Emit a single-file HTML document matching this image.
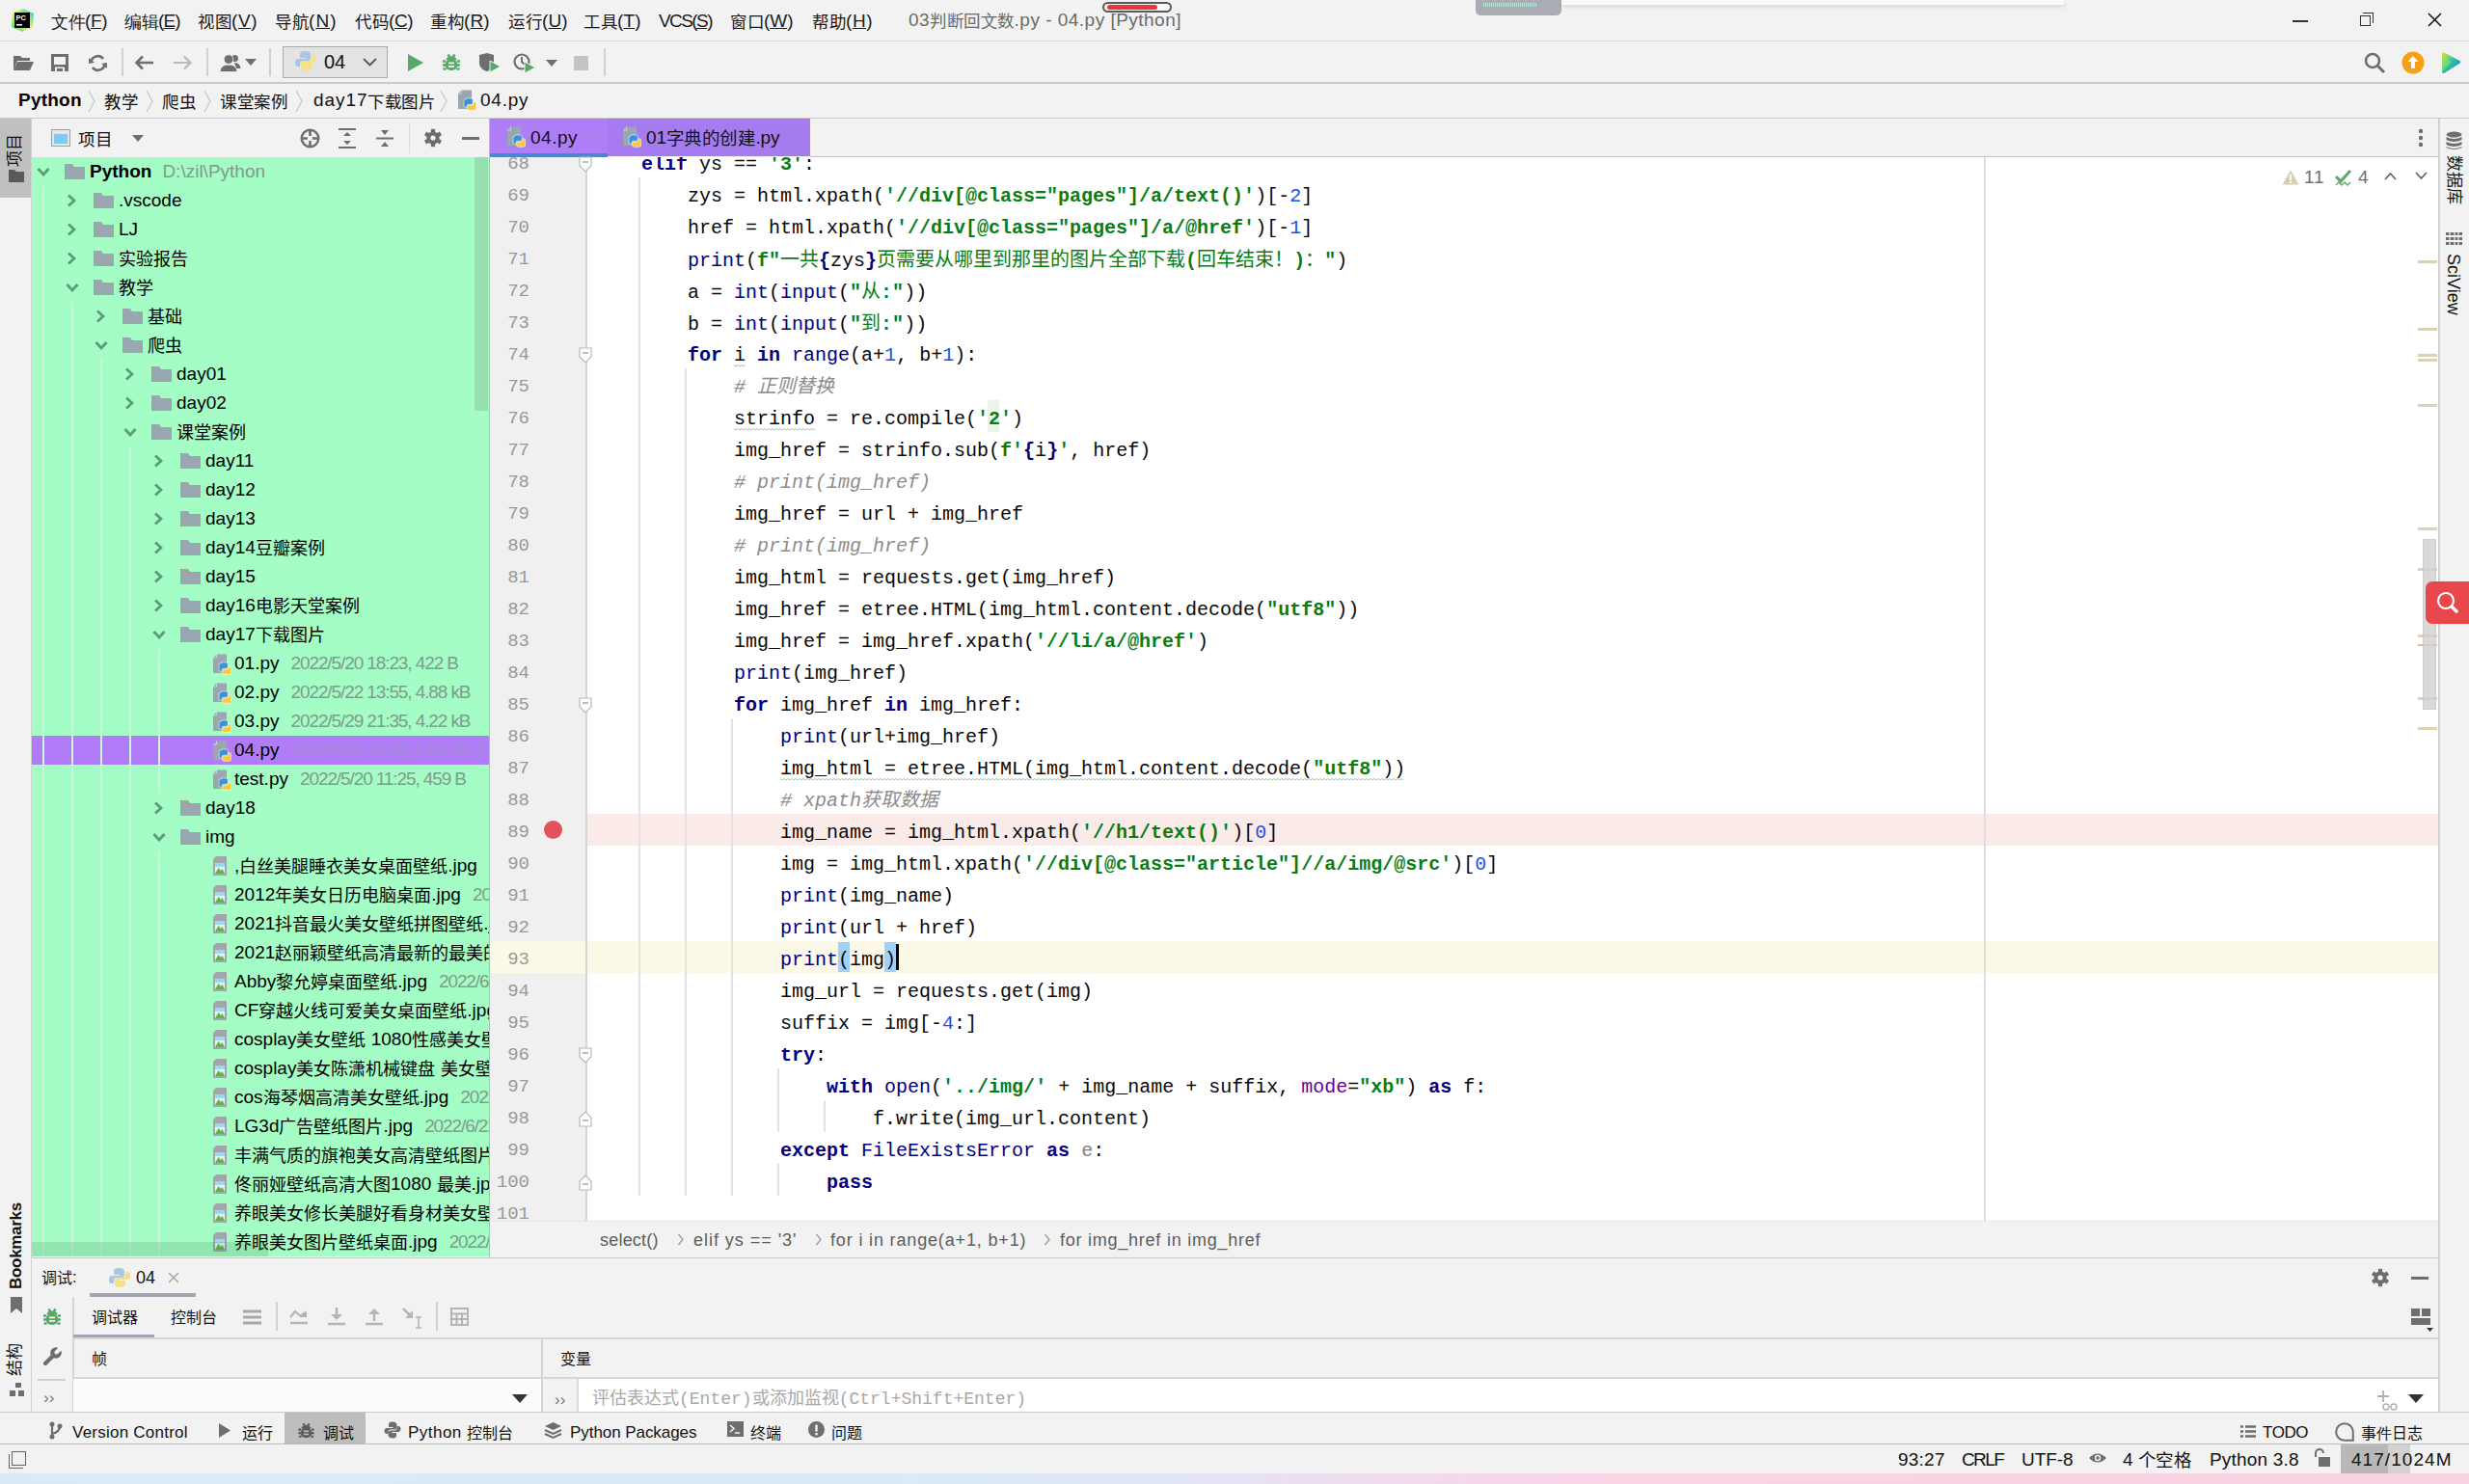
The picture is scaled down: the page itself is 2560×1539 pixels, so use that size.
<!DOCTYPE html><html lang="zh-CN"><head><meta charset="utf-8"><style>
*{margin:0;padding:0}
html,body{width:2560px;height:1539px;overflow:hidden;background:#f2f2f2}
.a{position:absolute;white-space:nowrap}
k{display:inline-block;width:1em;letter-spacing:0;text-indent:0}
.nocjk k{position:relative;-webkit-text-fill-color:transparent}
.nocjk k::after{content:'';position:absolute;left:0.1em;width:0.8em;top:50%;height:0.8em;margin-top:-0.42em;background-image:linear-gradient(currentColor,currentColor),linear-gradient(currentColor,currentColor),linear-gradient(currentColor,currentColor),linear-gradient(currentColor,currentColor);background-repeat:no-repeat;background-size:100% 0.075em,100% 0.075em,100% 0.075em,0.075em 100%;background-position:0 8%,0 50%,0 92%,45% 0;opacity:0.9}
.fs{font-family:"Liberation Sans",sans-serif}
.fm{font-family:"Liberation Mono",monospace}
.code{font-size:20px;color:#080808;white-space:pre}
.code .kw{color:#000080;font-weight:bold}
.code .bi{color:#000080}
.code .st{color:#067d17;font-weight:bold}
.code .nu{color:#1750eb}
.code .co{color:#8c8c8c;font-style:italic}
.code .pu{color:#660099}
.code .gr{color:#808080}
.code i.cj{font-style:inherit;font-weight:normal;}
.code .st i.cj{font-weight:500;font-family:"Liberation Serif",serif}
.ln{font-size:19px;color:#999999;text-align:right}
</style><script>(function(){try{var c=document.createElement('canvas').getContext('2d');c.font='40px \'Liberation Sans\',sans-serif';var w=c.measureText('\u6587\u4ef6\u7f16\u8f91').width;if(Math.abs(w-160)>3){document.documentElement.className+=' nocjk';}}catch(e){}})();</script></head><body><div class="a" style="left:0px;top:0px;width:2560px;height:1539px;background:#f2f2f2;"></div>
<svg class="a" style="left:10px;top:8px" width="26" height="26" viewBox="0 0 26 26"><defs><linearGradient id="pcg" x1="0" y1="1" x2="1" y2="0"><stop offset="0" stop-color="#21d789"/><stop offset="0.5" stop-color="#fcf84a"/><stop offset="1" stop-color="#07c3f2"/></linearGradient></defs><path d="M3 5 L14 1 L25 6 L24 20 L13 25 L2 20 Z" fill="url(#pcg)"/><rect x="5" y="5" width="16" height="16" fill="#000"/><text x="6.5" y="12.5" font-family="Liberation Sans" font-weight="bold" font-size="7.5" fill="#fff">PC</text><rect x="7" y="17" width="6" height="1.5" fill="#fff"/></svg>
<div id="t0" class="a fs" style="left:53px;top:2.0px;height:40px;line-height:40px;font-size:19px;color:#1a1a1a;font-weight:normal;letter-spacing:-0.389px;"><span style="font-size:17.5px;position:relative;top:0.5px"><k>文</k><k>件</k></span>(<u>F</u>)</div>
<div id="t1" class="a fs" style="left:129px;top:2.0px;height:40px;line-height:40px;font-size:19px;color:#1a1a1a;font-weight:normal;letter-spacing:-0.928px;"><span style="font-size:17.5px;position:relative;top:0.5px"><k>编</k><k>辑</k></span>(<u>E</u>)</div>
<div id="t2" class="a fs" style="left:205px;top:2.0px;height:40px;line-height:40px;font-size:19px;color:#1a1a1a;font-weight:normal;letter-spacing:0.572px;"><span style="font-size:17.5px;position:relative;top:0.5px"><k>视</k><k>图</k></span>(<u>V</u>)</div>
<div id="t3" class="a fs" style="left:285px;top:2.0px;height:40px;line-height:40px;font-size:19px;color:#1a1a1a;font-weight:normal;letter-spacing:1.058px;"><span style="font-size:17.5px;position:relative;top:0.5px"><k>导</k><k>航</k></span>(<u>N</u>)</div>
<div id="t4" class="a fs" style="left:368px;top:2.0px;height:40px;line-height:40px;font-size:19px;color:#1a1a1a;font-weight:normal;letter-spacing:-0.442px;"><span style="font-size:17.5px;position:relative;top:0.5px"><k>代</k><k>码</k></span>(<u>C</u>)</div>
<div id="t5" class="a fs" style="left:446px;top:2.0px;height:40px;line-height:40px;font-size:19px;color:#1a1a1a;font-weight:normal;letter-spacing:0.058px;"><span style="font-size:17.5px;position:relative;top:0.5px"><k>重</k><k>构</k></span>(<u>R</u>)</div>
<div id="t6" class="a fs" style="left:527px;top:2.0px;height:40px;line-height:40px;font-size:19px;color:#1a1a1a;font-weight:normal;letter-spacing:0.058px;"><span style="font-size:17.5px;position:relative;top:0.5px"><k>运</k><k>行</k></span>(<u>U</u>)</div>
<div id="t7" class="a fs" style="left:605px;top:2.0px;height:40px;line-height:40px;font-size:19px;color:#1a1a1a;font-weight:normal;letter-spacing:0.111px;"><span style="font-size:17.5px;position:relative;top:0.5px"><k>工</k><k>具</k></span>(<u>T</u>)</div>
<div id="t8" class="a fs" style="left:683px;top:2.0px;height:40px;line-height:40px;font-size:19px;color:#1a1a1a;font-weight:normal;letter-spacing:-1.580px;">VCS(<u>S</u>)</div>
<div id="t9" class="a fs" style="left:757px;top:2.0px;height:40px;line-height:40px;font-size:19px;color:#1a1a1a;font-weight:normal;letter-spacing:-0.047px;"><span style="font-size:17.5px;position:relative;top:0.5px"><k>窗</k><k>口</k></span>(<u>W</u>)</div>
<div id="t10" class="a fs" style="left:842px;top:2.0px;height:40px;line-height:40px;font-size:19px;color:#1a1a1a;font-weight:normal;letter-spacing:0.558px;"><span style="font-size:17.5px;position:relative;top:0.5px"><k>帮</k><k>助</k></span>(<u>H</u>)</div>
<div id="t11" class="a fs" style="left:942px;top:1.0px;height:40px;line-height:40px;font-size:19px;color:#6a6a6a;font-weight:normal;letter-spacing:0.483px;">03<span style="font-size:17.5px;position:relative;top:0.5px"><k>判</k><k>断</k><k>回</k><k>文</k><k>数</k></span>.py - 04.py [Python]</div>
<div class="a" style="left:1143px;top:2px;width:72px;height:11px;border:2.5px solid #5a5a5a;border-radius:7px;background:#f7f7f7;box-sizing:border-box"></div>
<div class="a" style="left:1148px;top:5px;width:52px;height:5px;background:#e5383e;border-radius:3px;"></div>
<div class="a" style="left:1530px;top:0px;width:89px;height:16px;background:#a9acb2;border-radius:0 0 5px 5px;"></div>
<div class="a" style="left:1538px;top:3px;width:56px;height:4px;background:repeating-linear-gradient(90deg,#b9e6d8 0 1px,#a9acb2 1px 2px);"></div>
<div class="a" style="left:1619px;top:0px;width:521px;height:5px;background:#fafafa;box-shadow:0 2px 4px rgba(0,0,0,0.12);"></div>
<div class="a" style="left:2377px;top:21px;width:16px;height:1.5px;background:#333;"></div>
<div class="a" style="left:2447px;top:16px;width:11px;height:11px;border:1.5px solid #333;box-sizing:border-box;background:#f2f2f2"></div>
<div class="a" style="left:2450px;top:13px;width:11px;height:11px;border-top:1.5px solid #333;border-right:1.5px solid #333;box-sizing:border-box"></div>
<svg class="a" style="left:2517px;top:13px" width="15" height="15" viewBox="0 0 15 15"><path d="M1 1 L14 14 M14 1 L1 14" stroke="#111" stroke-width="1.5"/></svg>
<div class="a" style="left:0px;top:42px;width:2560px;height:1px;background:#dadada;"></div>
<svg class="a" style="left:13px;top:56px" width="23" height="18" viewBox="0 0 23 18"><path d="M1 2 L8 2 L10 4 L18 4 L18 7 L5 7 L1 17 Z" fill="#6e6e6e"/><path d="M5 8 L22 8 L18 17 L1 17 Z" fill="#6e6e6e"/></svg>
<svg class="a" style="left:53px;top:56px" width="19" height="19" viewBox="0 0 19 19"><path d="M0 0 H18 V18 H0 Z M3 3 V11 H15 V3 Z M4 13.5 V18 H14 V13.5 Z" fill="#6e6e6e" fill-rule="evenodd"/><rect x="6" y="15" width="6" height="3" fill="#6e6e6e"/></svg>
<svg class="a" style="left:92px;top:56px" width="19" height="19" viewBox="0 0 19 19"><path d="M2.5 8 A7 7 0 0 1 15 5" stroke="#6e6e6e" stroke-width="2.6" fill="none"/><path d="M0 4 L6 9 L0 10Z" fill="#6e6e6e"/><path d="M16.5 11 A7 7 0 0 1 4 14" stroke="#6e6e6e" stroke-width="2.6" fill="none"/><path d="M19 15 L13 10 L19 9Z" fill="#6e6e6e"/></svg>
<div class="a" style="left:126px;top:50px;width:1.5px;height:29px;background:#cfcfcf;"></div>
<svg class="a" style="left:139px;top:57px" width="21" height="16" viewBox="0 0 21 16"><path d="M20 8 H3 M9 1.5 L2.5 8 L9 14.5" stroke="#6e6e6e" stroke-width="2.6" fill="none"/></svg>
<svg class="a" style="left:179px;top:57px" width="21" height="16" viewBox="0 0 21 16"><path d="M1 8 H18 M12 1.5 L18.5 8 L12 14.5" stroke="#b8b8b8" stroke-width="2.2" fill="none"/></svg>
<div class="a" style="left:214px;top:50px;width:1.5px;height:29px;background:#cfcfcf;"></div>
<svg class="a" style="left:228px;top:56px" width="24" height="19" viewBox="0 0 24 19"><circle cx="15.5" cy="4.5" r="3.5" fill="#6e6e6e"/><path d="M15 9 Q21 9 21.5 15 L17 15 Z" fill="#6e6e6e"/><circle cx="9" cy="5.5" r="4.8" fill="#6e6e6e" stroke="#f2f2f2" stroke-width="0.8"/><path d="M0 18.5 Q0.5 11 9 11 Q17.5 11 18 18.5 Z" fill="#6e6e6e" stroke="#f2f2f2" stroke-width="0.8"/></svg>
<svg class="a" style="left:254px;top:61px" width="12" height="7" viewBox="0 0 12 7"><path d="M0 0 H12 L6 7 Z" fill="#6e6e6e"/></svg>
<div class="a" style="left:279px;top:50px;width:1.5px;height:29px;background:#cfcfcf;"></div>
<div class="a" style="left:293px;top:48px;width:109px;height:33px;background:#e3e3e3;border:1.5px solid #ababab;box-sizing:border-box"></div>
<svg class="a" style="left:306px;top:52px" width="22" height="22" viewBox="0 0 22 22"><path d="M10 1 C6 1 5 3 5 5 V8 H11 V9 H3 C1 9 0 11 0 13 C0 16 1 17 3 17 H5 V14 C5 12 6 11 8 11 H13 C15 11 16 10 16 8 V4 C16 2 14 1 10 1 Z" fill="#a9c6e4"/><path d="M12 21 C16 21 17 19 17 17 V14 H11 V13 H19 C21 13 22 11 22 9 C22 6 21 5 19 5 H17 V8 C17 10 16 11 14 11 H9 C7 11 6 12 6 14 V18 C6 20 8 21 12 21 Z" fill="#f4e08a"/></svg>
<div id="t12" class="a fs" style="left:336px;top:44.0px;height:40px;line-height:40px;font-size:20px;color:#111;font-weight:normal;">04</div>
<svg class="a" style="left:376px;top:60px" width="15" height="9" viewBox="0 0 15 9"><path d="M1 1 L7.5 7.5 L14 1" stroke="#555" stroke-width="1.8" fill="none"/></svg>
<svg class="a" style="left:423px;top:56px" width="16" height="18" viewBox="0 0 16 18"><path d="M0 0 L16 9 L0 18 Z" fill="#59a869"/></svg>
<svg class="a" style="left:459px;top:55px" width="18" height="19" viewBox="0 0 18 19"><path d="M5.5 1.5 L7.5 4.5 M12.5 1.5 L10.5 4.5" stroke="#59a869" stroke-width="2.4"/><path d="M3.5 7.5 Q3.5 3.5 9 3.5 Q14.5 3.5 14.5 7.5 Z" fill="#59a869"/><rect x="2.5" y="6.5" width="13" height="11.5" rx="6" fill="#59a869"/><path d="M0 8.5 H3 M15 8.5 H18 M0 12.5 H3 M15 12.5 H18 M0.5 16.5 H3.5 M14.5 16.5 H17.5" stroke="#59a869" stroke-width="2.4"/><rect x="6" y="9.5" width="6" height="1.8" fill="#f2f2f2"/><rect x="6" y="13" width="6" height="1.8" fill="#f2f2f2"/></svg>
<svg class="a" style="left:496px;top:55px" width="24" height="20" viewBox="0 0 24 20"><path d="M1 2 L9 0 L16 2 V10 C16 15 12 18 9 19 C5 18 1 15 1 10 Z" fill="#6e6e6e"/><path d="M9 1 V18" stroke="#f2f2f2" stroke-width="0"/><path d="M12 8 L23 14 L12 20 Z" fill="#59a869" stroke="#f2f2f2" stroke-width="1"/></svg>
<svg class="a" style="left:532px;top:55px" width="24" height="21" viewBox="0 0 24 21"><circle cx="9" cy="9" r="7.5" stroke="#6e6e6e" stroke-width="2.2" fill="none"/><path d="M9 4 V9 L12 12" stroke="#6e6e6e" stroke-width="2" fill="none"/><path d="M12 9 L23 15 L12 21 Z" fill="#59a869" stroke="#f2f2f2" stroke-width="1"/></svg>
<svg class="a" style="left:566px;top:62px" width="12" height="7" viewBox="0 0 12 7"><path d="M0 0 H12 L6 7 Z" fill="#6e6e6e"/></svg>
<div class="a" style="left:595px;top:58px;width:15px;height:15px;background:#c4c4c4;"></div>
<div class="a" style="left:626px;top:50px;width:1.5px;height:29px;background:#cfcfcf;"></div>
<svg class="a" style="left:2451px;top:54px" width="24" height="24" viewBox="0 0 24 24"><circle cx="9" cy="9" r="7" stroke="#6e6e6e" stroke-width="2.6" fill="none"/><path d="M14 14 L21 21" stroke="#6e6e6e" stroke-width="3"/></svg>
<svg class="a" style="left:2490px;top:53px" width="24" height="24" viewBox="0 0 24 24"><circle cx="12" cy="12" r="11.5" fill="#f6a01a"/><path d="M12 5 L6.5 11 H10 V18 H14 V11 H17.5 Z" fill="#fff"/></svg>
<svg class="a" style="left:2529px;top:53px" width="24" height="24" viewBox="0 0 24 24"><defs><linearGradient id="tg" x1="0" y1="0" x2="1" y2="1"><stop offset="0" stop-color="#e6ef3a"/><stop offset="0.45" stop-color="#2fc7a0"/><stop offset="1" stop-color="#1a6fd8"/></linearGradient></defs><path d="M3 3 Q3 0.5 5.5 1.5 L21.5 10 Q23 11 21.5 12.5 L6 22.5 Q3 24 3 21 Z" fill="url(#tg)"/><path d="M3 3 L13 11.5 L3 21Z" fill="#9be05a" opacity="0.55"/></svg>
<div class="a" style="left:0px;top:85px;width:2560px;height:1.5px;background:#c9c9c9;"></div>
<div id="t13" class="a fs" style="left:19px;top:84.0px;height:40px;line-height:40px;font-size:19px;color:#000;font-weight:bold;letter-spacing:0.221px;">Python</div>
<svg class="a" style="left:91px;top:93px" width="8" height="24" viewBox="0 0 8 24"><path d="M1 1 L7 12 L1 23" stroke="#c8c8c8" stroke-width="1.3" fill="none"/></svg>
<svg class="a" style="left:151px;top:93px" width="8" height="24" viewBox="0 0 8 24"><path d="M1 1 L7 12 L1 23" stroke="#c8c8c8" stroke-width="1.3" fill="none"/></svg>
<svg class="a" style="left:211px;top:93px" width="8" height="24" viewBox="0 0 8 24"><path d="M1 1 L7 12 L1 23" stroke="#c8c8c8" stroke-width="1.3" fill="none"/></svg>
<svg class="a" style="left:306px;top:93px" width="8" height="24" viewBox="0 0 8 24"><path d="M1 1 L7 12 L1 23" stroke="#c8c8c8" stroke-width="1.3" fill="none"/></svg>
<svg class="a" style="left:456px;top:93px" width="8" height="24" viewBox="0 0 8 24"><path d="M1 1 L7 12 L1 23" stroke="#c8c8c8" stroke-width="1.3" fill="none"/></svg>
<div id="t14" class="a fs" style="left:108px;top:84.0px;height:40px;line-height:40px;font-size:19px;color:#111;font-weight:normal;letter-spacing:0.000px;"><span style="font-size:17.5px;position:relative;top:1.5px"><k>教</k><k>学</k></span></div>
<div id="t15" class="a fs" style="left:168px;top:84.0px;height:40px;line-height:40px;font-size:19px;color:#111;font-weight:normal;letter-spacing:0.000px;"><span style="font-size:17.5px;position:relative;top:1.5px"><k>爬</k><k>虫</k></span></div>
<div id="t16" class="a fs" style="left:228px;top:84.0px;height:40px;line-height:40px;font-size:19px;color:#111;font-weight:normal;letter-spacing:0.000px;"><span style="font-size:17.5px;position:relative;top:1.5px"><k>课</k><k>堂</k><k>案</k><k>例</k></span></div>
<div id="t17" class="a fs" style="left:325px;top:84.0px;height:40px;line-height:40px;font-size:19px;color:#111;font-weight:normal;letter-spacing:0.931px;">day17<span style="font-size:17.5px;position:relative;top:1.5px"><k>下</k><k>载</k><k>图</k><k>片</k></span></div>
<svg class="a" style="left:474px;top:92px" width="20" height="23" viewBox="0 0 20 23"><path d="M1 5 L4.5 1.5 H15 V21 H1 Z" fill="#9aa7b0"/><path d="M1 5 H4.5 V1.5" fill="none" stroke="#d8dde0" stroke-width="0.8"/><path d="M9.5 10 H14.5 Q16.3 10 16.3 11.8 V14.8 Q16.3 16.3 14.8 16.3 H11.6 Q10.1 16.3 10.1 17.8 V19.3 H8.8 Q7 19.3 7 17.3 V12.6 Q7 11 9.2 11 Z" fill="#3d8fd8" stroke="#f0fff4" stroke-width="0.6"/><path d="M17.5 22.3 H12.3 Q10.6 22.3 10.6 20.5 V18.6 Q10.6 17.1 12.1 17.1 H15.3 Q16.8 17.1 16.8 15.6 V13.8 H18 Q19.8 13.8 19.8 15.8 V20.4 Q19.8 22.3 17.5 22.3 Z" fill="#fcc63a" stroke="#f0fff4" stroke-width="0.6"/></svg>
<div id="t18" class="a fs" style="left:498px;top:84.0px;height:40px;line-height:40px;font-size:19px;color:#111;font-weight:normal;letter-spacing:0.752px;">04.py</div>
<div class="a" style="left:0px;top:122px;width:2560px;height:1.5px;background:#c9c9c9;"></div>
<div class="a" style="left:0px;top:123px;width:32px;height:1342px;background:#f2f2f2;"></div>
<div class="a" style="left:0px;top:123px;width:32px;height:82px;background:#c0c0c0;"></div>
<div class="a" style="left:32px;top:123px;width:1px;height:1342px;background:#d0d0d0;"></div>
<div class="a fs" style="left:2px;top:138px;width:28px;height:36px;font-size:17px;line-height:28px;color:#111;writing-mode:vertical-rl;text-orientation:sideways;transform:rotate(180deg);text-align:center">项目</div>
<svg class="a" style="left:9px;top:176px" width="16" height="13" viewBox="0 0 16 13"><path d="M0 0 H6 L8 2 H16 V13 H0 Z" fill="#5a5a5a"/></svg>
<div class="a fs" style="left:3px;top:1251px;width:28px;height:86px;font-size:17px;line-height:28px;color:#111;font-weight:bold;letter-spacing:-0.3px;writing-mode:vertical-rl;text-orientation:sideways;transform:rotate(180deg);text-align:center">Bookmarks</div>
<svg class="a" style="left:11px;top:1345px" width="12" height="17" viewBox="0 0 12 17"><path d="M0 0 H12 V17 L6 12 L0 17 Z" fill="#6e6e6e"/></svg>
<div class="a fs" style="left:2px;top:1393px;width:28px;height:34px;font-size:17px;line-height:28px;color:#111;writing-mode:vertical-rl;text-orientation:sideways;transform:rotate(180deg);text-align:center">结构</div>
<svg class="a" style="left:10px;top:1434px" width="16" height="14" viewBox="0 0 16 14"><rect x="6" y="0" width="6" height="5" fill="#6e6e6e"/><rect x="0" y="8" width="6" height="6" fill="#6e6e6e"/><rect x="9" y="8" width="6" height="6" fill="#6e6e6e"/></svg>
<div class="a" style="left:2528px;top:123px;width:32px;height:1342px;background:#f2f2f2;"></div>
<div class="a" style="left:2528px;top:123px;width:1.5px;height:1342px;background:#cfcfcf;"></div>
<svg class="a" style="left:2536px;top:136px" width="17" height="20" viewBox="0 0 17 20"><ellipse cx="8.5" cy="3.5" rx="8" ry="3" fill="#6e6e6e"/><path d="M0.5 6 Q8.5 10 16.5 6 V9 Q8.5 13 0.5 9 Z M0.5 11 Q8.5 15 16.5 11 V14 Q8.5 18 0.5 14 Z M0.5 16 Q8.5 20 16.5 16 V17 Q8.5 21 0.5 17Z" fill="#6e6e6e"/></svg>
<div class="a fs" style="left:2530px;top:160px;width:28px;height:52px;font-size:17px;line-height:28px;color:#111;writing-mode:vertical-rl;text-orientation:sideways;text-align:center">数据库</div>
<svg class="a" style="left:2536px;top:241px" width="17" height="15" viewBox="0 0 17 15"><path d="M0 0 H17 V3 H0Z M0 5 H17 V8 H0Z M0 10 H17 V13 H0Z" fill="#6e6e6e"/><path d="M4 0 V13 M9 0 V13 M13 0 V13" stroke="#f2f2f2" stroke-width="1.2"/></svg>
<div class="a fs" style="left:2530px;top:263px;width:28px;height:62px;font-size:18px;line-height:28px;color:#111;writing-mode:vertical-rl;text-align:center">SciView</div>
<div class="a" style="left:33px;top:123px;width:474px;height:40px;background:#f2f2f2;"></div>
<svg class="a" style="left:53px;top:134px" width="20" height="18" viewBox="0 0 20 18"><rect x="0.5" y="0.5" width="19" height="17" fill="#e6e6e6" stroke="#9aa0a6"/><rect x="3" y="5" width="14" height="10" fill="#7ccbf2"/></svg>
<div id="t19" class="a fs" style="left:81px;top:123.0px;height:40px;line-height:40px;font-size:19px;color:#111;font-weight:normal;letter-spacing:0.000px;"><span style="font-size:17.5px;position:relative;top:1.5px"><k>项</k><k>目</k></span></div>
<svg class="a" style="left:137px;top:140px" width="12" height="7" viewBox="0 0 12 7"><path d="M0 0 H12 L6 7 Z" fill="#6e6e6e"/></svg>
<svg class="a" style="left:311px;top:133px" width="21" height="21" viewBox="0 0 21 21"><circle cx="10.5" cy="10.5" r="8.8" stroke="#6e6e6e" stroke-width="2.4" fill="none"/><path d="M10.5 3 V8 M10.5 13 V18 M3 10.5 H8 M13 10.5 H18" stroke="#6e6e6e" stroke-width="2.6"/></svg>
<svg class="a" style="left:351px;top:133px" width="19" height="21" viewBox="0 0 19 21"><path d="M0 1 H18 M0 20 H18" stroke="#6e6e6e" stroke-width="2"/><path d="M5 8 L9 4 L13 8Z M5 13 L9 17 L13 13Z" fill="#6e6e6e"/></svg>
<svg class="a" style="left:390px;top:133px" width="19" height="21" viewBox="0 0 19 21"><path d="M0 10.5 H18" stroke="#6e6e6e" stroke-width="2"/><path d="M5 2 H13 L9 7Z M5 19 H13 L9 14Z" fill="#6e6e6e"/></svg>
<div class="a" style="left:424px;top:128px;width:1px;height:31px;background:#dcdcdc;"></div>
<svg class="a" style="left:439px;top:133px" width="20" height="20" viewBox="0 0 20 20"><circle cx="10" cy="10" r="6.6" fill="#6e6e6e"/><rect x="7.9" y="0.8" width="4.2" height="4.5" transform="rotate(0 10 10)" fill="#6e6e6e"/><rect x="7.9" y="0.8" width="4.2" height="4.5" transform="rotate(60 10 10)" fill="#6e6e6e"/><rect x="7.9" y="0.8" width="4.2" height="4.5" transform="rotate(120 10 10)" fill="#6e6e6e"/><rect x="7.9" y="0.8" width="4.2" height="4.5" transform="rotate(180 10 10)" fill="#6e6e6e"/><rect x="7.9" y="0.8" width="4.2" height="4.5" transform="rotate(240 10 10)" fill="#6e6e6e"/><rect x="7.9" y="0.8" width="4.2" height="4.5" transform="rotate(300 10 10)" fill="#6e6e6e"/><circle cx="10" cy="10" r="2.6" fill="#f2f2f2"/></svg>
<div class="a" style="left:479px;top:142px;width:18px;height:2.5px;background:#6e6e6e;"></div>
<div class="a" style="left:33px;top:163px;width:474px;height:1140px;background:#a4fdc5;"></div>
<div class="a" style="left:33px;top:763px;width:474px;height:30px;background:#b07cf7;"></div>
<div class="a" style="left:44px;top:193px;width:1.5px;height:1110px;background:#c9f5d8;"></div>
<div class="a" style="left:74px;top:313px;width:1.5px;height:990px;background:#c9f5d8;"></div>
<div class="a" style="left:104px;top:373px;width:1.5px;height:930px;background:#c9f5d8;"></div>
<div class="a" style="left:134px;top:463px;width:1.5px;height:840px;background:#c9f5d8;"></div>
<div class="a" style="left:164px;top:673px;width:1.5px;height:150px;background:#c9f5d8;"></div>
<div class="a" style="left:164px;top:883px;width:1.5px;height:420px;background:#c9f5d8;"></div>
<div class="a" style="left:0;top:0;width:507px;height:1303px;overflow:hidden">
<svg class="a" style="left:38px;top:173px" width="14" height="10" viewBox="0 0 14 10"><path d="M1.5 2 L7 8 L12.5 2" stroke="#5a9c76" stroke-width="2.8" fill="none"/></svg>
<svg class="a" style="left:67px;top:170px" width="21" height="16" viewBox="0 0 21 16"><path d="M0 0 H8 L10 3 H21 V16 H0 Z" fill="#9aa7b0"/></svg>
<div class="a fs" style="left:93px;top:158px;height:40px;line-height:40px;font-size:19px;color:#000;font-weight:bold;white-space:nowrap">Python<span style="font-weight:normal;color:#7f9c8a;margin-left:11px;letter-spacing:0px">D:\zil\Python</span></div>
<svg class="a" style="left:69px;top:201px" width="10" height="14" viewBox="0 0 10 14"><path d="M2 1.5 L8 7 L2 12.5" stroke="#5a9c76" stroke-width="2.8" fill="none"/></svg>
<svg class="a" style="left:97px;top:200px" width="21" height="16" viewBox="0 0 21 16"><path d="M0 0 H8 L10 3 H21 V16 H0 Z" fill="#9aa7b0"/></svg>
<div class="a fs" style="left:123px;top:188px;height:40px;line-height:40px;font-size:19px;color:#000;font-weight:normal;white-space:nowrap">.vscode</div>
<svg class="a" style="left:69px;top:231px" width="10" height="14" viewBox="0 0 10 14"><path d="M2 1.5 L8 7 L2 12.5" stroke="#5a9c76" stroke-width="2.8" fill="none"/></svg>
<svg class="a" style="left:97px;top:230px" width="21" height="16" viewBox="0 0 21 16"><path d="M0 0 H8 L10 3 H21 V16 H0 Z" fill="#9aa7b0"/></svg>
<div class="a fs" style="left:123px;top:218px;height:40px;line-height:40px;font-size:19px;color:#000;font-weight:normal;white-space:nowrap">LJ</div>
<svg class="a" style="left:69px;top:261px" width="10" height="14" viewBox="0 0 10 14"><path d="M2 1.5 L8 7 L2 12.5" stroke="#5a9c76" stroke-width="2.8" fill="none"/></svg>
<svg class="a" style="left:97px;top:260px" width="21" height="16" viewBox="0 0 21 16"><path d="M0 0 H8 L10 3 H21 V16 H0 Z" fill="#9aa7b0"/></svg>
<div class="a fs" style="left:123px;top:248px;height:40px;line-height:40px;font-size:19px;color:#000;font-weight:normal;white-space:nowrap"><span style="font-size:18px;position:relative;top:1px"><k>实</k><k>验</k><k>报</k><k>告</k></span></div>
<svg class="a" style="left:68px;top:293px" width="14" height="10" viewBox="0 0 14 10"><path d="M1.5 2 L7 8 L12.5 2" stroke="#5a9c76" stroke-width="2.8" fill="none"/></svg>
<svg class="a" style="left:97px;top:290px" width="21" height="16" viewBox="0 0 21 16"><path d="M0 0 H8 L10 3 H21 V16 H0 Z" fill="#9aa7b0"/></svg>
<div class="a fs" style="left:123px;top:278px;height:40px;line-height:40px;font-size:19px;color:#000;font-weight:normal;white-space:nowrap"><span style="font-size:18px;position:relative;top:1px"><k>教</k><k>学</k></span></div>
<svg class="a" style="left:99px;top:321px" width="10" height="14" viewBox="0 0 10 14"><path d="M2 1.5 L8 7 L2 12.5" stroke="#5a9c76" stroke-width="2.8" fill="none"/></svg>
<svg class="a" style="left:127px;top:320px" width="21" height="16" viewBox="0 0 21 16"><path d="M0 0 H8 L10 3 H21 V16 H0 Z" fill="#9aa7b0"/></svg>
<div class="a fs" style="left:153px;top:308px;height:40px;line-height:40px;font-size:19px;color:#000;font-weight:normal;white-space:nowrap"><span style="font-size:18px;position:relative;top:1px"><k>基</k><k>础</k></span></div>
<svg class="a" style="left:98px;top:353px" width="14" height="10" viewBox="0 0 14 10"><path d="M1.5 2 L7 8 L12.5 2" stroke="#5a9c76" stroke-width="2.8" fill="none"/></svg>
<svg class="a" style="left:127px;top:350px" width="21" height="16" viewBox="0 0 21 16"><path d="M0 0 H8 L10 3 H21 V16 H0 Z" fill="#9aa7b0"/></svg>
<div class="a fs" style="left:153px;top:338px;height:40px;line-height:40px;font-size:19px;color:#000;font-weight:normal;white-space:nowrap"><span style="font-size:18px;position:relative;top:1px"><k>爬</k><k>虫</k></span></div>
<svg class="a" style="left:129px;top:381px" width="10" height="14" viewBox="0 0 10 14"><path d="M2 1.5 L8 7 L2 12.5" stroke="#5a9c76" stroke-width="2.8" fill="none"/></svg>
<svg class="a" style="left:157px;top:380px" width="21" height="16" viewBox="0 0 21 16"><path d="M0 0 H8 L10 3 H21 V16 H0 Z" fill="#9aa7b0"/></svg>
<div class="a fs" style="left:183px;top:368px;height:40px;line-height:40px;font-size:19px;color:#000;font-weight:normal;white-space:nowrap">day01</div>
<svg class="a" style="left:129px;top:411px" width="10" height="14" viewBox="0 0 10 14"><path d="M2 1.5 L8 7 L2 12.5" stroke="#5a9c76" stroke-width="2.8" fill="none"/></svg>
<svg class="a" style="left:157px;top:410px" width="21" height="16" viewBox="0 0 21 16"><path d="M0 0 H8 L10 3 H21 V16 H0 Z" fill="#9aa7b0"/></svg>
<div class="a fs" style="left:183px;top:398px;height:40px;line-height:40px;font-size:19px;color:#000;font-weight:normal;white-space:nowrap">day02</div>
<svg class="a" style="left:128px;top:443px" width="14" height="10" viewBox="0 0 14 10"><path d="M1.5 2 L7 8 L12.5 2" stroke="#5a9c76" stroke-width="2.8" fill="none"/></svg>
<svg class="a" style="left:157px;top:440px" width="21" height="16" viewBox="0 0 21 16"><path d="M0 0 H8 L10 3 H21 V16 H0 Z" fill="#9aa7b0"/></svg>
<div class="a fs" style="left:183px;top:428px;height:40px;line-height:40px;font-size:19px;color:#000;font-weight:normal;white-space:nowrap"><span style="font-size:18px;position:relative;top:1px"><k>课</k><k>堂</k><k>案</k><k>例</k></span></div>
<svg class="a" style="left:159px;top:471px" width="10" height="14" viewBox="0 0 10 14"><path d="M2 1.5 L8 7 L2 12.5" stroke="#5a9c76" stroke-width="2.8" fill="none"/></svg>
<svg class="a" style="left:187px;top:470px" width="21" height="16" viewBox="0 0 21 16"><path d="M0 0 H8 L10 3 H21 V16 H0 Z" fill="#9aa7b0"/></svg>
<div class="a fs" style="left:213px;top:458px;height:40px;line-height:40px;font-size:19px;color:#000;font-weight:normal;white-space:nowrap">day11</div>
<svg class="a" style="left:159px;top:501px" width="10" height="14" viewBox="0 0 10 14"><path d="M2 1.5 L8 7 L2 12.5" stroke="#5a9c76" stroke-width="2.8" fill="none"/></svg>
<svg class="a" style="left:187px;top:500px" width="21" height="16" viewBox="0 0 21 16"><path d="M0 0 H8 L10 3 H21 V16 H0 Z" fill="#9aa7b0"/></svg>
<div class="a fs" style="left:213px;top:488px;height:40px;line-height:40px;font-size:19px;color:#000;font-weight:normal;white-space:nowrap">day12</div>
<svg class="a" style="left:159px;top:531px" width="10" height="14" viewBox="0 0 10 14"><path d="M2 1.5 L8 7 L2 12.5" stroke="#5a9c76" stroke-width="2.8" fill="none"/></svg>
<svg class="a" style="left:187px;top:530px" width="21" height="16" viewBox="0 0 21 16"><path d="M0 0 H8 L10 3 H21 V16 H0 Z" fill="#9aa7b0"/></svg>
<div class="a fs" style="left:213px;top:518px;height:40px;line-height:40px;font-size:19px;color:#000;font-weight:normal;white-space:nowrap">day13</div>
<svg class="a" style="left:159px;top:561px" width="10" height="14" viewBox="0 0 10 14"><path d="M2 1.5 L8 7 L2 12.5" stroke="#5a9c76" stroke-width="2.8" fill="none"/></svg>
<svg class="a" style="left:187px;top:560px" width="21" height="16" viewBox="0 0 21 16"><path d="M0 0 H8 L10 3 H21 V16 H0 Z" fill="#9aa7b0"/></svg>
<div class="a fs" style="left:213px;top:548px;height:40px;line-height:40px;font-size:19px;color:#000;font-weight:normal;white-space:nowrap">day14<span style="font-size:18px;position:relative;top:1px"><k>豆</k><k>瓣</k><k>案</k><k>例</k></span></div>
<svg class="a" style="left:159px;top:591px" width="10" height="14" viewBox="0 0 10 14"><path d="M2 1.5 L8 7 L2 12.5" stroke="#5a9c76" stroke-width="2.8" fill="none"/></svg>
<svg class="a" style="left:187px;top:590px" width="21" height="16" viewBox="0 0 21 16"><path d="M0 0 H8 L10 3 H21 V16 H0 Z" fill="#9aa7b0"/></svg>
<div class="a fs" style="left:213px;top:578px;height:40px;line-height:40px;font-size:19px;color:#000;font-weight:normal;white-space:nowrap">day15</div>
<svg class="a" style="left:159px;top:621px" width="10" height="14" viewBox="0 0 10 14"><path d="M2 1.5 L8 7 L2 12.5" stroke="#5a9c76" stroke-width="2.8" fill="none"/></svg>
<svg class="a" style="left:187px;top:620px" width="21" height="16" viewBox="0 0 21 16"><path d="M0 0 H8 L10 3 H21 V16 H0 Z" fill="#9aa7b0"/></svg>
<div class="a fs" style="left:213px;top:608px;height:40px;line-height:40px;font-size:19px;color:#000;font-weight:normal;white-space:nowrap">day16<span style="font-size:18px;position:relative;top:1px"><k>电</k><k>影</k><k>天</k><k>堂</k><k>案</k><k>例</k></span></div>
<svg class="a" style="left:158px;top:653px" width="14" height="10" viewBox="0 0 14 10"><path d="M1.5 2 L7 8 L12.5 2" stroke="#5a9c76" stroke-width="2.8" fill="none"/></svg>
<svg class="a" style="left:187px;top:650px" width="21" height="16" viewBox="0 0 21 16"><path d="M0 0 H8 L10 3 H21 V16 H0 Z" fill="#9aa7b0"/></svg>
<div class="a fs" style="left:213px;top:638px;height:40px;line-height:40px;font-size:19px;color:#000;font-weight:normal;white-space:nowrap">day17<span style="font-size:18px;position:relative;top:1px"><k>下</k><k>载</k><k>图</k><k>片</k></span></div>
<svg class="a" style="left:220px;top:677px" width="20" height="23" viewBox="0 0 20 23"><path d="M1 5 L4.5 1.5 H15 V21 H1 Z" fill="#9aa7b0"/><path d="M1 5 H4.5 V1.5" fill="none" stroke="#d8dde0" stroke-width="0.8"/><path d="M9.5 10 H14.5 Q16.3 10 16.3 11.8 V14.8 Q16.3 16.3 14.8 16.3 H11.6 Q10.1 16.3 10.1 17.8 V19.3 H8.8 Q7 19.3 7 17.3 V12.6 Q7 11 9.2 11 Z" fill="#3d8fd8" stroke="#f0fff4" stroke-width="0.6"/><path d="M17.5 22.3 H12.3 Q10.6 22.3 10.6 20.5 V18.6 Q10.6 17.1 12.1 17.1 H15.3 Q16.8 17.1 16.8 15.6 V13.8 H18 Q19.8 13.8 19.8 15.8 V20.4 Q19.8 22.3 17.5 22.3 Z" fill="#fcc63a" stroke="#f0fff4" stroke-width="0.6"/></svg>
<div class="a fs" style="left:243px;top:668px;height:40px;line-height:40px;font-size:19px;color:#000;font-weight:normal;white-space:nowrap">01.py<span style="font-weight:normal;color:#7f9c8a;margin-left:12px;letter-spacing:-1.1px">2022/5/20 18:23, 422 B</span></div>
<svg class="a" style="left:220px;top:707px" width="20" height="23" viewBox="0 0 20 23"><path d="M1 5 L4.5 1.5 H15 V21 H1 Z" fill="#9aa7b0"/><path d="M1 5 H4.5 V1.5" fill="none" stroke="#d8dde0" stroke-width="0.8"/><path d="M9.5 10 H14.5 Q16.3 10 16.3 11.8 V14.8 Q16.3 16.3 14.8 16.3 H11.6 Q10.1 16.3 10.1 17.8 V19.3 H8.8 Q7 19.3 7 17.3 V12.6 Q7 11 9.2 11 Z" fill="#3d8fd8" stroke="#f0fff4" stroke-width="0.6"/><path d="M17.5 22.3 H12.3 Q10.6 22.3 10.6 20.5 V18.6 Q10.6 17.1 12.1 17.1 H15.3 Q16.8 17.1 16.8 15.6 V13.8 H18 Q19.8 13.8 19.8 15.8 V20.4 Q19.8 22.3 17.5 22.3 Z" fill="#fcc63a" stroke="#f0fff4" stroke-width="0.6"/></svg>
<div class="a fs" style="left:243px;top:698px;height:40px;line-height:40px;font-size:19px;color:#000;font-weight:normal;white-space:nowrap">02.py<span style="font-weight:normal;color:#7f9c8a;margin-left:12px;letter-spacing:-1.1px">2022/5/22 13:55, 4.88 kB</span></div>
<svg class="a" style="left:220px;top:737px" width="20" height="23" viewBox="0 0 20 23"><path d="M1 5 L4.5 1.5 H15 V21 H1 Z" fill="#9aa7b0"/><path d="M1 5 H4.5 V1.5" fill="none" stroke="#d8dde0" stroke-width="0.8"/><path d="M9.5 10 H14.5 Q16.3 10 16.3 11.8 V14.8 Q16.3 16.3 14.8 16.3 H11.6 Q10.1 16.3 10.1 17.8 V19.3 H8.8 Q7 19.3 7 17.3 V12.6 Q7 11 9.2 11 Z" fill="#3d8fd8" stroke="#f0fff4" stroke-width="0.6"/><path d="M17.5 22.3 H12.3 Q10.6 22.3 10.6 20.5 V18.6 Q10.6 17.1 12.1 17.1 H15.3 Q16.8 17.1 16.8 15.6 V13.8 H18 Q19.8 13.8 19.8 15.8 V20.4 Q19.8 22.3 17.5 22.3 Z" fill="#fcc63a" stroke="#f0fff4" stroke-width="0.6"/></svg>
<div class="a fs" style="left:243px;top:728px;height:40px;line-height:40px;font-size:19px;color:#000;font-weight:normal;white-space:nowrap">03.py<span style="font-weight:normal;color:#7f9c8a;margin-left:12px;letter-spacing:-1.1px">2022/5/29 21:35, 4.22 kB</span></div>
<svg class="a" style="left:220px;top:767px" width="20" height="23" viewBox="0 0 20 23"><path d="M1 5 L4.5 1.5 H15 V21 H1 Z" fill="#9aa7b0"/><path d="M1 5 H4.5 V1.5" fill="none" stroke="#d8dde0" stroke-width="0.8"/><path d="M9.5 10 H14.5 Q16.3 10 16.3 11.8 V14.8 Q16.3 16.3 14.8 16.3 H11.6 Q10.1 16.3 10.1 17.8 V19.3 H8.8 Q7 19.3 7 17.3 V12.6 Q7 11 9.2 11 Z" fill="#3d8fd8" stroke="#f0fff4" stroke-width="0.6"/><path d="M17.5 22.3 H12.3 Q10.6 22.3 10.6 20.5 V18.6 Q10.6 17.1 12.1 17.1 H15.3 Q16.8 17.1 16.8 15.6 V13.8 H18 Q19.8 13.8 19.8 15.8 V20.4 Q19.8 22.3 17.5 22.3 Z" fill="#fcc63a" stroke="#f0fff4" stroke-width="0.6"/></svg>
<div class="a fs" style="left:243px;top:758px;height:40px;line-height:40px;font-size:19px;color:#000;font-weight:normal;white-space:nowrap">04.py<span style="font-weight:normal;color:#a68ad8;margin-left:12px;letter-spacing:-1.1px">2022/6/22 21:44, 5.86 kB 片</span></div>
<svg class="a" style="left:220px;top:797px" width="20" height="23" viewBox="0 0 20 23"><path d="M1 5 L4.5 1.5 H15 V21 H1 Z" fill="#9aa7b0"/><path d="M1 5 H4.5 V1.5" fill="none" stroke="#d8dde0" stroke-width="0.8"/><path d="M9.5 10 H14.5 Q16.3 10 16.3 11.8 V14.8 Q16.3 16.3 14.8 16.3 H11.6 Q10.1 16.3 10.1 17.8 V19.3 H8.8 Q7 19.3 7 17.3 V12.6 Q7 11 9.2 11 Z" fill="#3d8fd8" stroke="#f0fff4" stroke-width="0.6"/><path d="M17.5 22.3 H12.3 Q10.6 22.3 10.6 20.5 V18.6 Q10.6 17.1 12.1 17.1 H15.3 Q16.8 17.1 16.8 15.6 V13.8 H18 Q19.8 13.8 19.8 15.8 V20.4 Q19.8 22.3 17.5 22.3 Z" fill="#fcc63a" stroke="#f0fff4" stroke-width="0.6"/></svg>
<div class="a fs" style="left:243px;top:788px;height:40px;line-height:40px;font-size:19px;color:#000;font-weight:normal;white-space:nowrap">test.py<span style="font-weight:normal;color:#7f9c8a;margin-left:12px;letter-spacing:-1.1px">2022/5/20 11:25, 459 B</span></div>
<svg class="a" style="left:159px;top:831px" width="10" height="14" viewBox="0 0 10 14"><path d="M2 1.5 L8 7 L2 12.5" stroke="#5a9c76" stroke-width="2.8" fill="none"/></svg>
<svg class="a" style="left:187px;top:830px" width="21" height="16" viewBox="0 0 21 16"><path d="M0 0 H8 L10 3 H21 V16 H0 Z" fill="#9aa7b0"/></svg>
<div class="a fs" style="left:213px;top:818px;height:40px;line-height:40px;font-size:19px;color:#000;font-weight:normal;white-space:nowrap">day18</div>
<svg class="a" style="left:158px;top:863px" width="14" height="10" viewBox="0 0 14 10"><path d="M1.5 2 L7 8 L12.5 2" stroke="#5a9c76" stroke-width="2.8" fill="none"/></svg>
<svg class="a" style="left:187px;top:860px" width="21" height="16" viewBox="0 0 21 16"><path d="M0 0 H8 L10 3 H21 V16 H0 Z" fill="#9aa7b0"/></svg>
<div class="a fs" style="left:213px;top:848px;height:40px;line-height:40px;font-size:19px;color:#000;font-weight:normal;white-space:nowrap">img</div>
<svg class="a" style="left:220px;top:888px" width="16" height="21" viewBox="0 0 16 21"><path d="M1 3 L4 0 H15 V20 H1 Z" fill="#a0a6ab"/><rect x="3" y="7" width="10" height="11" fill="#e8f4f8"/><path d="M3 18 L6.5 12 L9 15 L10.5 13 L13 18 Z" fill="#62b543"/><rect x="3" y="7" width="10" height="4" fill="#9fd6f2"/></svg>
<div class="a fs" style="left:243px;top:878px;height:40px;line-height:40px;font-size:19px;color:#000;font-weight:normal;white-space:nowrap">,<span style="font-size:18px;position:relative;top:1px"><k>白</k><k>丝</k><k>美</k><k>腿</k><k>睡</k><k>衣</k><k>美</k><k>女</k><k>桌</k><k>面</k><k>壁</k><k>纸</k></span>.jpg<span style="font-weight:normal;color:#7f9c8a;margin-left:12px;letter-spacing:-1.1px">2022/6/22</span></div>
<svg class="a" style="left:220px;top:918px" width="16" height="21" viewBox="0 0 16 21"><path d="M1 3 L4 0 H15 V20 H1 Z" fill="#a0a6ab"/><rect x="3" y="7" width="10" height="11" fill="#e8f4f8"/><path d="M3 18 L6.5 12 L9 15 L10.5 13 L13 18 Z" fill="#62b543"/><rect x="3" y="7" width="10" height="4" fill="#9fd6f2"/></svg>
<div class="a fs" style="left:243px;top:908px;height:40px;line-height:40px;font-size:19px;color:#000;font-weight:normal;white-space:nowrap">2012<span style="font-size:18px;position:relative;top:1px"><k>年</k><k>美</k><k>女</k><k>日</k><k>历</k><k>电</k><k>脑</k><k>桌</k><k>面</k></span>.jpg<span style="font-weight:normal;color:#7f9c8a;margin-left:12px;letter-spacing:-1.1px">2022/6/22</span></div>
<svg class="a" style="left:220px;top:948px" width="16" height="21" viewBox="0 0 16 21"><path d="M1 3 L4 0 H15 V20 H1 Z" fill="#a0a6ab"/><rect x="3" y="7" width="10" height="11" fill="#e8f4f8"/><path d="M3 18 L6.5 12 L9 15 L10.5 13 L13 18 Z" fill="#62b543"/><rect x="3" y="7" width="10" height="4" fill="#9fd6f2"/></svg>
<div class="a fs" style="left:243px;top:938px;height:40px;line-height:40px;font-size:19px;color:#000;font-weight:normal;white-space:nowrap">2021<span style="font-size:18px;position:relative;top:1px"><k>抖</k><k>音</k><k>最</k><k>火</k><k>美</k><k>女</k><k>壁</k><k>纸</k><k>拼</k><k>图</k><k>壁</k><k>纸</k></span>.jpg<span style="font-weight:normal;color:#7f9c8a;margin-left:12px;letter-spacing:-1.1px">2022/6/22</span></div>
<svg class="a" style="left:220px;top:978px" width="16" height="21" viewBox="0 0 16 21"><path d="M1 3 L4 0 H15 V20 H1 Z" fill="#a0a6ab"/><rect x="3" y="7" width="10" height="11" fill="#e8f4f8"/><path d="M3 18 L6.5 12 L9 15 L10.5 13 L13 18 Z" fill="#62b543"/><rect x="3" y="7" width="10" height="4" fill="#9fd6f2"/></svg>
<div class="a fs" style="left:243px;top:968px;height:40px;line-height:40px;font-size:19px;color:#000;font-weight:normal;white-space:nowrap">2021<span style="font-size:18px;position:relative;top:1px"><k>赵</k><k>丽</k><k>颖</k><k>壁</k><k>纸</k><k>高</k><k>清</k><k>最</k><k>新</k><k>的</k><k>最</k><k>美</k><k>的</k></span>.jpg<span style="font-weight:normal;color:#7f9c8a;margin-left:12px;letter-spacing:-1.1px">2022/6/22</span></div>
<svg class="a" style="left:220px;top:1008px" width="16" height="21" viewBox="0 0 16 21"><path d="M1 3 L4 0 H15 V20 H1 Z" fill="#a0a6ab"/><rect x="3" y="7" width="10" height="11" fill="#e8f4f8"/><path d="M3 18 L6.5 12 L9 15 L10.5 13 L13 18 Z" fill="#62b543"/><rect x="3" y="7" width="10" height="4" fill="#9fd6f2"/></svg>
<div class="a fs" style="left:243px;top:998px;height:40px;line-height:40px;font-size:19px;color:#000;font-weight:normal;white-space:nowrap">Abby<span style="font-size:18px;position:relative;top:1px"><k>黎</k><k>允</k><k>婷</k><k>桌</k><k>面</k><k>壁</k><k>纸</k></span>.jpg<span style="font-weight:normal;color:#7f9c8a;margin-left:12px;letter-spacing:-1.1px">2022/6/22</span></div>
<svg class="a" style="left:220px;top:1038px" width="16" height="21" viewBox="0 0 16 21"><path d="M1 3 L4 0 H15 V20 H1 Z" fill="#a0a6ab"/><rect x="3" y="7" width="10" height="11" fill="#e8f4f8"/><path d="M3 18 L6.5 12 L9 15 L10.5 13 L13 18 Z" fill="#62b543"/><rect x="3" y="7" width="10" height="4" fill="#9fd6f2"/></svg>
<div class="a fs" style="left:243px;top:1028px;height:40px;line-height:40px;font-size:19px;color:#000;font-weight:normal;white-space:nowrap">CF<span style="font-size:18px;position:relative;top:1px"><k>穿</k><k>越</k><k>火</k><k>线</k><k>可</k><k>爱</k><k>美</k><k>女</k><k>桌</k><k>面</k><k>壁</k><k>纸</k></span>.jpg<span style="font-weight:normal;color:#7f9c8a;margin-left:12px;letter-spacing:-1.1px">2022/6/22</span></div>
<svg class="a" style="left:220px;top:1068px" width="16" height="21" viewBox="0 0 16 21"><path d="M1 3 L4 0 H15 V20 H1 Z" fill="#a0a6ab"/><rect x="3" y="7" width="10" height="11" fill="#e8f4f8"/><path d="M3 18 L6.5 12 L9 15 L10.5 13 L13 18 Z" fill="#62b543"/><rect x="3" y="7" width="10" height="4" fill="#9fd6f2"/></svg>
<div class="a fs" style="left:243px;top:1058px;height:40px;line-height:40px;font-size:19px;color:#000;font-weight:normal;white-space:nowrap">cosplay<span style="font-size:18px;position:relative;top:1px"><k>美</k><k>女</k><k>壁</k><k>纸</k></span> 1080<span style="font-size:18px;position:relative;top:1px"><k>性</k><k>感</k><k>美</k><k>女</k><k>壁</k><k>纸</k></span>.jpg<span style="font-weight:normal;color:#7f9c8a;margin-left:12px;letter-spacing:-1.1px">2022/6/22</span></div>
<svg class="a" style="left:220px;top:1098px" width="16" height="21" viewBox="0 0 16 21"><path d="M1 3 L4 0 H15 V20 H1 Z" fill="#a0a6ab"/><rect x="3" y="7" width="10" height="11" fill="#e8f4f8"/><path d="M3 18 L6.5 12 L9 15 L10.5 13 L13 18 Z" fill="#62b543"/><rect x="3" y="7" width="10" height="4" fill="#9fd6f2"/></svg>
<div class="a fs" style="left:243px;top:1088px;height:40px;line-height:40px;font-size:19px;color:#000;font-weight:normal;white-space:nowrap">cosplay<span style="font-size:18px;position:relative;top:1px"><k>美</k><k>女</k><k>陈</k><k>潇</k><k>机</k><k>械</k><k>键</k><k>盘</k></span> <span style="font-size:18px;position:relative;top:1px"><k>美</k><k>女</k><k>壁</k><k>纸</k></span>.jpg<span style="font-weight:normal;color:#7f9c8a;margin-left:12px;letter-spacing:-1.1px">2022/6/22</span></div>
<svg class="a" style="left:220px;top:1128px" width="16" height="21" viewBox="0 0 16 21"><path d="M1 3 L4 0 H15 V20 H1 Z" fill="#a0a6ab"/><rect x="3" y="7" width="10" height="11" fill="#e8f4f8"/><path d="M3 18 L6.5 12 L9 15 L10.5 13 L13 18 Z" fill="#62b543"/><rect x="3" y="7" width="10" height="4" fill="#9fd6f2"/></svg>
<div class="a fs" style="left:243px;top:1118px;height:40px;line-height:40px;font-size:19px;color:#000;font-weight:normal;white-space:nowrap">cos<span style="font-size:18px;position:relative;top:1px"><k>海</k><k>琴</k><k>烟</k><k>高</k><k>清</k><k>美</k><k>女</k><k>壁</k><k>纸</k></span>.jpg<span style="font-weight:normal;color:#7f9c8a;margin-left:12px;letter-spacing:-1.1px">2022/6/22</span></div>
<svg class="a" style="left:220px;top:1158px" width="16" height="21" viewBox="0 0 16 21"><path d="M1 3 L4 0 H15 V20 H1 Z" fill="#a0a6ab"/><rect x="3" y="7" width="10" height="11" fill="#e8f4f8"/><path d="M3 18 L6.5 12 L9 15 L10.5 13 L13 18 Z" fill="#62b543"/><rect x="3" y="7" width="10" height="4" fill="#9fd6f2"/></svg>
<div class="a fs" style="left:243px;top:1148px;height:40px;line-height:40px;font-size:19px;color:#000;font-weight:normal;white-space:nowrap">LG3d<span style="font-size:18px;position:relative;top:1px"><k>广</k><k>告</k><k>壁</k><k>纸</k><k>图</k><k>片</k></span>.jpg<span style="font-weight:normal;color:#7f9c8a;margin-left:12px;letter-spacing:-1.1px">2022/6/22</span></div>
<svg class="a" style="left:220px;top:1188px" width="16" height="21" viewBox="0 0 16 21"><path d="M1 3 L4 0 H15 V20 H1 Z" fill="#a0a6ab"/><rect x="3" y="7" width="10" height="11" fill="#e8f4f8"/><path d="M3 18 L6.5 12 L9 15 L10.5 13 L13 18 Z" fill="#62b543"/><rect x="3" y="7" width="10" height="4" fill="#9fd6f2"/></svg>
<div class="a fs" style="left:243px;top:1178px;height:40px;line-height:40px;font-size:19px;color:#000;font-weight:normal;white-space:nowrap"><span style="font-size:18px;position:relative;top:1px"><k>丰</k><k>满</k><k>气</k><k>质</k><k>的</k><k>旗</k><k>袍</k><k>美</k><k>女</k><k>高</k><k>清</k><k>壁</k><k>纸</k><k>图</k><k>片</k></span>.jpg<span style="font-weight:normal;color:#7f9c8a;margin-left:12px;letter-spacing:-1.1px">2022/6/22</span></div>
<svg class="a" style="left:220px;top:1218px" width="16" height="21" viewBox="0 0 16 21"><path d="M1 3 L4 0 H15 V20 H1 Z" fill="#a0a6ab"/><rect x="3" y="7" width="10" height="11" fill="#e8f4f8"/><path d="M3 18 L6.5 12 L9 15 L10.5 13 L13 18 Z" fill="#62b543"/><rect x="3" y="7" width="10" height="4" fill="#9fd6f2"/></svg>
<div class="a fs" style="left:243px;top:1208px;height:40px;line-height:40px;font-size:19px;color:#000;font-weight:normal;white-space:nowrap"><span style="font-size:18px;position:relative;top:1px"><k>佟</k><k>丽</k><k>娅</k><k>壁</k><k>纸</k><k>高</k><k>清</k><k>大</k><k>图</k></span>1080 <span style="font-size:18px;position:relative;top:1px"><k>最</k><k>美</k></span>.jpg<span style="font-weight:normal;color:#7f9c8a;margin-left:12px;letter-spacing:-1.1px">2022/6/22</span></div>
<svg class="a" style="left:220px;top:1248px" width="16" height="21" viewBox="0 0 16 21"><path d="M1 3 L4 0 H15 V20 H1 Z" fill="#a0a6ab"/><rect x="3" y="7" width="10" height="11" fill="#e8f4f8"/><path d="M3 18 L6.5 12 L9 15 L10.5 13 L13 18 Z" fill="#62b543"/><rect x="3" y="7" width="10" height="4" fill="#9fd6f2"/></svg>
<div class="a fs" style="left:243px;top:1238px;height:40px;line-height:40px;font-size:19px;color:#000;font-weight:normal;white-space:nowrap"><span style="font-size:18px;position:relative;top:1px"><k>养</k><k>眼</k><k>美</k><k>女</k><k>修</k><k>长</k><k>美</k><k>腿</k><k>好</k><k>看</k><k>身</k><k>材</k><k>美</k><k>女</k><k>壁</k><k>纸</k></span>.jpg<span style="font-weight:normal;color:#7f9c8a;margin-left:12px;letter-spacing:-1.1px">2022/6/22</span></div>
<svg class="a" style="left:220px;top:1278px" width="16" height="21" viewBox="0 0 16 21"><path d="M1 3 L4 0 H15 V20 H1 Z" fill="#a0a6ab"/><rect x="3" y="7" width="10" height="11" fill="#e8f4f8"/><path d="M3 18 L6.5 12 L9 15 L10.5 13 L13 18 Z" fill="#62b543"/><rect x="3" y="7" width="10" height="4" fill="#9fd6f2"/></svg>
<div class="a fs" style="left:243px;top:1268px;height:40px;line-height:40px;font-size:19px;color:#000;font-weight:normal;white-space:nowrap"><span style="font-size:18px;position:relative;top:1px"><k>养</k><k>眼</k><k>美</k><k>女</k><k>图</k><k>片</k><k>壁</k><k>纸</k><k>桌</k><k>面</k></span>.jpg<span style="font-weight:normal;color:#7f9c8a;margin-left:12px;letter-spacing:-1.1px">2022/6/22</span></div>
</div>
<div class="a" style="left:492px;top:163px;width:14px;height:263px;background:#97e0b2;"></div>
<div class="a" style="left:33px;top:1288px;width:245px;height:15px;background:rgba(60,120,80,0.18);"></div>
<div class="a" style="left:507px;top:123px;width:1px;height:1182px;background:#b8b8b8;"></div>
<div class="a" style="left:508px;top:123px;width:2020px;height:39px;background:#f2f2f2;"></div>
<div class="a" style="left:508px;top:123px;width:332px;height:39px;background:#a67bf0;"></div>
<div class="a" style="left:508px;top:123px;width:122px;height:39px;background:#ad7ef7;"></div>
<div class="a" style="left:508px;top:159px;width:122px;height:4px;background:#4a88c7;"></div>
<div class="a" style="left:840px;top:162px;width:1688px;height:1.5px;background:#c4c4c4;"></div>
<svg class="a" style="left:525px;top:130px" width="20" height="23" viewBox="0 0 20 23"><path d="M1 5 L4.5 1.5 H15 V21 H1 Z" fill="#9aa7b0"/><path d="M1 5 H4.5 V1.5" fill="none" stroke="#d8dde0" stroke-width="0.8"/><path d="M9.5 10 H14.5 Q16.3 10 16.3 11.8 V14.8 Q16.3 16.3 14.8 16.3 H11.6 Q10.1 16.3 10.1 17.8 V19.3 H8.8 Q7 19.3 7 17.3 V12.6 Q7 11 9.2 11 Z" fill="#3d8fd8" stroke="#f0fff4" stroke-width="0.6"/><path d="M17.5 22.3 H12.3 Q10.6 22.3 10.6 20.5 V18.6 Q10.6 17.1 12.1 17.1 H15.3 Q16.8 17.1 16.8 15.6 V13.8 H18 Q19.8 13.8 19.8 15.8 V20.4 Q19.8 22.3 17.5 22.3 Z" fill="#fcc63a" stroke="#f0fff4" stroke-width="0.6"/></svg>
<div id="t20" class="a fs" style="left:550px;top:123.0px;height:40px;line-height:40px;font-size:19px;color:#111;font-weight:normal;letter-spacing:0.502px;">04.py</div>
<svg class="a" style="left:606px;top:136px" width="12" height="12" viewBox="0 0 12 12"><path d="M1 1 L11 11 M11 1 L1 11" stroke="#a58ae0" stroke-width="1.4"/></svg>
<svg class="a" style="left:645px;top:130px" width="20" height="23" viewBox="0 0 20 23"><path d="M1 5 L4.5 1.5 H15 V21 H1 Z" fill="#9aa7b0"/><path d="M1 5 H4.5 V1.5" fill="none" stroke="#d8dde0" stroke-width="0.8"/><path d="M9.5 10 H14.5 Q16.3 10 16.3 11.8 V14.8 Q16.3 16.3 14.8 16.3 H11.6 Q10.1 16.3 10.1 17.8 V19.3 H8.8 Q7 19.3 7 17.3 V12.6 Q7 11 9.2 11 Z" fill="#3d8fd8" stroke="#f0fff4" stroke-width="0.6"/><path d="M17.5 22.3 H12.3 Q10.6 22.3 10.6 20.5 V18.6 Q10.6 17.1 12.1 17.1 H15.3 Q16.8 17.1 16.8 15.6 V13.8 H18 Q19.8 13.8 19.8 15.8 V20.4 Q19.8 22.3 17.5 22.3 Z" fill="#fcc63a" stroke="#f0fff4" stroke-width="0.6"/></svg>
<div id="t21" class="a fs" style="left:670px;top:123.0px;height:40px;line-height:40px;font-size:19px;color:#111;font-weight:normal;letter-spacing:-0.121px;">01<span style="font-size:18.5px;position:relative;top:1px"><k>字</k><k>典</k><k>的</k><k>创</k><k>建</k></span>.py</div>
<svg class="a" style="left:815px;top:136px" width="12" height="12" viewBox="0 0 12 12"><path d="M1 1 L11 11 M11 1 L1 11" stroke="#a080df" stroke-width="1.4"/></svg>
<svg class="a" style="left:2506px;top:133px" width="8" height="20" viewBox="0 0 8 20"><circle cx="4" cy="3" r="2.2" fill="#6e6e6e"/><circle cx="4" cy="10" r="2.2" fill="#6e6e6e"/><circle cx="4" cy="17" r="2.2" fill="#6e6e6e"/></svg>
<div class="a" style="left:508px;top:163px;width:2020px;height:1104px;background:#ffffff;"></div>
<div class="a" style="left:508px;top:163px;width:99px;height:1104px;background:#f0f0f0;"></div>
<div class="a" style="left:508px;top:976px;width:2020px;height:33px;background:#fdf9e8;"></div>
<div class="a" style="left:607px;top:844px;width:1921px;height:33px;background:#faeae8;"></div>
<div class="a" style="left:607px;top:163px;width:1.5px;height:1104px;background:#d6d6d6;"></div>
<div class="a" style="left:2057px;top:163px;width:1.5px;height:1104px;background:#dedede;"></div>
<div class="a" style="left:662px;top:184px;width:1.5px;height:1056px;background:#e3e3e3;"></div>
<div class="a" style="left:710px;top:382px;width:1.5px;height:858px;background:#e3e3e3;"></div>
<div class="a" style="left:758px;top:745px;width:1.5px;height:495px;background:#e3e3e3;"></div>
<div class="a" style="left:806px;top:1108px;width:1.5px;height:66px;background:#e3e3e3;"></div>
<div class="a" style="left:806px;top:1207px;width:1.5px;height:33px;background:#e3e3e3;"></div>
<div class="a" style="left:854px;top:1141px;width:1.5px;height:33px;background:#e3e3e3;"></div>
<div class="a" style="left:869px;top:977px;width:12px;height:31px;background:#9fd0f7;"></div>
<div class="a" style="left:917px;top:977px;width:12px;height:31px;background:#9fd0f7;"></div>
<div class="a" style="left:1024px;top:415px;width:12px;height:33px;background:#e9f5e9;"></div>
<svg class="a" style="left:761px;top:378px" width="12" height="3" viewBox="0 -0.5 12 3"><polyline points="0,0 2,1.5 4,0 6,1.5 8,0 10,1.5 12,0" fill="none" stroke="#a9bfae" stroke-width="1"/></svg>
<svg class="a" style="left:761px;top:444px" width="84" height="3" viewBox="0 -0.5 84 3"><polyline points="0,0 2,1.5 4,0 6,1.5 8,0 10,1.5 12,0 14,1.5 16,0 18,1.5 20,0 22,1.5 24,0 26,1.5 28,0 30,1.5 32,0 34,1.5 36,0 38,1.5 40,0 42,1.5 44,0 46,1.5 48,0 50,1.5 52,0 54,1.5 56,0 58,1.5 60,0 62,1.5 64,0 66,1.5 68,0 70,1.5 72,0 74,1.5 76,0 78,1.5 80,0 82,1.5 84,0" fill="none" stroke="#a9bfae" stroke-width="1"/></svg>
<svg class="a" style="left:809px;top:807px" width="647" height="3" viewBox="0 -0.5 647 3"><polyline points="0,0 2,1.5 4,0 6,1.5 8,0 10,1.5 12,0 14,1.5 16,0 18,1.5 20,0 22,1.5 24,0 26,1.5 28,0 30,1.5 32,0 34,1.5 36,0 38,1.5 40,0 42,1.5 44,0 46,1.5 48,0 50,1.5 52,0 54,1.5 56,0 58,1.5 60,0 62,1.5 64,0 66,1.5 68,0 70,1.5 72,0 74,1.5 76,0 78,1.5 80,0 82,1.5 84,0 86,1.5 88,0 90,1.5 92,0 94,1.5 96,0 98,1.5 100,0 102,1.5 104,0 106,1.5 108,0 110,1.5 112,0 114,1.5 116,0 118,1.5 120,0 122,1.5 124,0 126,1.5 128,0 130,1.5 132,0 134,1.5 136,0 138,1.5 140,0 142,1.5 144,0 146,1.5 148,0 150,1.5 152,0 154,1.5 156,0 158,1.5 160,0 162,1.5 164,0 166,1.5 168,0 170,1.5 172,0 174,1.5 176,0 178,1.5 180,0 182,1.5 184,0 186,1.5 188,0 190,1.5 192,0 194,1.5 196,0 198,1.5 200,0 202,1.5 204,0 206,1.5 208,0 210,1.5 212,0 214,1.5 216,0 218,1.5 220,0 222,1.5 224,0 226,1.5 228,0 230,1.5 232,0 234,1.5 236,0 238,1.5 240,0 242,1.5 244,0 246,1.5 248,0 250,1.5 252,0 254,1.5 256,0 258,1.5 260,0 262,1.5 264,0 266,1.5 268,0 270,1.5 272,0 274,1.5 276,0 278,1.5 280,0 282,1.5 284,0 286,1.5 288,0 290,1.5 292,0 294,1.5 296,0 298,1.5 300,0 302,1.5 304,0 306,1.5 308,0 310,1.5 312,0 314,1.5 316,0 318,1.5 320,0 322,1.5 324,0 326,1.5 328,0 330,1.5 332,0 334,1.5 336,0 338,1.5 340,0 342,1.5 344,0 346,1.5 348,0 350,1.5 352,0 354,1.5 356,0 358,1.5 360,0 362,1.5 364,0 366,1.5 368,0 370,1.5 372,0 374,1.5 376,0 378,1.5 380,0 382,1.5 384,0 386,1.5 388,0 390,1.5 392,0 394,1.5 396,0 398,1.5 400,0 402,1.5 404,0 406,1.5 408,0 410,1.5 412,0 414,1.5 416,0 418,1.5 420,0 422,1.5 424,0 426,1.5 428,0 430,1.5 432,0 434,1.5 436,0 438,1.5 440,0 442,1.5 444,0 446,1.5 448,0 450,1.5 452,0 454,1.5 456,0 458,1.5 460,0 462,1.5 464,0 466,1.5 468,0 470,1.5 472,0 474,1.5 476,0 478,1.5 480,0 482,1.5 484,0 486,1.5 488,0 490,1.5 492,0 494,1.5 496,0 498,1.5 500,0 502,1.5 504,0 506,1.5 508,0 510,1.5 512,0 514,1.5 516,0 518,1.5 520,0 522,1.5 524,0 526,1.5 528,0 530,1.5 532,0 534,1.5 536,0 538,1.5 540,0 542,1.5 544,0 546,1.5 548,0 550,1.5 552,0 554,1.5 556,0 558,1.5 560,0 562,1.5 564,0 566,1.5 568,0 570,1.5 572,0 574,1.5 576,0 578,1.5 580,0 582,1.5 584,0 586,1.5 588,0 590,1.5 592,0 594,1.5 596,0 598,1.5 600,0 602,1.5 604,0 606,1.5 608,0 610,1.5 612,0 614,1.5 616,0 618,1.5 620,0 622,1.5 624,0 626,1.5 628,0 630,1.5 632,0 634,1.5 636,0 638,1.5 640,0 642,1.5 644,0 646,1.5" fill="none" stroke="#a9bfae" stroke-width="1"/></svg>
<div class="a" style="left:508px;top:163px;width:2020px;height:1104px;overflow:hidden">
<div class="a fm code" style="left:109px;top:-9px;height:33px;line-height:33px">    <span class="kw">elif</span> ys == <span class="st">'3'</span>:</div>
<div class="a fm ln" style="left:0;width:41px;top:-9px;height:33px;line-height:33px">68</div>
<div class="a fm code" style="left:109px;top:24px;height:33px;line-height:33px">        zys = html.xpath(<span class="st">'//div[@class="pages"]/a/text()'</span>)[-<span class="nu">2</span>]</div>
<div class="a fm ln" style="left:0;width:41px;top:24px;height:33px;line-height:33px">69</div>
<div class="a fm code" style="left:109px;top:57px;height:33px;line-height:33px">        href = html.xpath(<span class="st">'//div[@class="pages"]/a/@href'</span>)[-<span class="nu">1</span>]</div>
<div class="a fm ln" style="left:0;width:41px;top:57px;height:33px;line-height:33px">70</div>
<div class="a fm code" style="left:109px;top:90px;height:33px;line-height:33px">        <span class="bi">print</span>(<span class="st">f"</span><span class="st"><i class="cj"><k>一</k><k>共</k></i></span><span class="kw">{</span>zys<span class="kw">}</span><span class="st"><i class="cj"><k>页</k><k>需</k><k>要</k><k>从</k><k>哪</k><k>里</k><k>到</k><k>那</k><k>里</k><k>的</k><k>图</k><k>片</k><k>全</k><k>部</k><k>下</k><k>载</k></i>(<i class="cj"><k>回</k><k>车</k><k>结</k><k>束</k><k>！</k></i>)<i class="cj"><k>：</k></i></span><span class="st">"</span>)</div>
<div class="a fm ln" style="left:0;width:41px;top:90px;height:33px;line-height:33px">71</div>
<div class="a fm code" style="left:109px;top:123px;height:33px;line-height:33px">        a = <span class="bi">int</span>(<span class="bi">input</span>(<span class="st">"<i class="cj"><k>从</k></i>:"</span>))</div>
<div class="a fm ln" style="left:0;width:41px;top:123px;height:33px;line-height:33px">72</div>
<div class="a fm code" style="left:109px;top:156px;height:33px;line-height:33px">        b = <span class="bi">int</span>(<span class="bi">input</span>(<span class="st">"<i class="cj"><k>到</k></i>:"</span>))</div>
<div class="a fm ln" style="left:0;width:41px;top:156px;height:33px;line-height:33px">73</div>
<div class="a fm code" style="left:109px;top:189px;height:33px;line-height:33px">        <span class="kw">for</span> i <span class="kw">in</span> <span class="bi">range</span>(a+<span class="nu">1</span>, b+<span class="nu">1</span>):</div>
<div class="a fm ln" style="left:0;width:41px;top:189px;height:33px;line-height:33px">74</div>
<div class="a fm code" style="left:109px;top:222px;height:33px;line-height:33px">            <span class="co"># <i class="cj"><k>正</k><k>则</k><k>替</k><k>换</k></i></span></div>
<div class="a fm ln" style="left:0;width:41px;top:222px;height:33px;line-height:33px">75</div>
<div class="a fm code" style="left:109px;top:255px;height:33px;line-height:33px">            strinfo = re.compile(<span class="st">'2'</span>)</div>
<div class="a fm ln" style="left:0;width:41px;top:255px;height:33px;line-height:33px">76</div>
<div class="a fm code" style="left:109px;top:288px;height:33px;line-height:33px">            img_href = strinfo.sub(<span class="st">f'</span><span class="kw">{</span>i<span class="kw">}</span><span class="st">'</span>, href)</div>
<div class="a fm ln" style="left:0;width:41px;top:288px;height:33px;line-height:33px">77</div>
<div class="a fm code" style="left:109px;top:321px;height:33px;line-height:33px">            <span class="co"># print(img_href)</span></div>
<div class="a fm ln" style="left:0;width:41px;top:321px;height:33px;line-height:33px">78</div>
<div class="a fm code" style="left:109px;top:354px;height:33px;line-height:33px">            img_href = url + img_href</div>
<div class="a fm ln" style="left:0;width:41px;top:354px;height:33px;line-height:33px">79</div>
<div class="a fm code" style="left:109px;top:387px;height:33px;line-height:33px">            <span class="co"># print(img_href)</span></div>
<div class="a fm ln" style="left:0;width:41px;top:387px;height:33px;line-height:33px">80</div>
<div class="a fm code" style="left:109px;top:420px;height:33px;line-height:33px">            img_html = requests.get(img_href)</div>
<div class="a fm ln" style="left:0;width:41px;top:420px;height:33px;line-height:33px">81</div>
<div class="a fm code" style="left:109px;top:453px;height:33px;line-height:33px">            img_href = etree.HTML(img_html.content.decode(<span class="st">"utf8"</span>))</div>
<div class="a fm ln" style="left:0;width:41px;top:453px;height:33px;line-height:33px">82</div>
<div class="a fm code" style="left:109px;top:486px;height:33px;line-height:33px">            img_href = img_href.xpath(<span class="st">'//li/a/@href'</span>)</div>
<div class="a fm ln" style="left:0;width:41px;top:486px;height:33px;line-height:33px">83</div>
<div class="a fm code" style="left:109px;top:519px;height:33px;line-height:33px">            <span class="bi">print</span>(img_href)</div>
<div class="a fm ln" style="left:0;width:41px;top:519px;height:33px;line-height:33px">84</div>
<div class="a fm code" style="left:109px;top:552px;height:33px;line-height:33px">            <span class="kw">for</span> img_href <span class="kw">in</span> img_href:</div>
<div class="a fm ln" style="left:0;width:41px;top:552px;height:33px;line-height:33px">85</div>
<div class="a fm code" style="left:109px;top:585px;height:33px;line-height:33px">                <span class="bi">print</span>(url+img_href)</div>
<div class="a fm ln" style="left:0;width:41px;top:585px;height:33px;line-height:33px">86</div>
<div class="a fm code" style="left:109px;top:618px;height:33px;line-height:33px">                img_html = etree.HTML(img_html.content.decode(<span class="st">"utf8"</span>))</div>
<div class="a fm ln" style="left:0;width:41px;top:618px;height:33px;line-height:33px">87</div>
<div class="a fm code" style="left:109px;top:651px;height:33px;line-height:33px">                <span class="co"># xpath<i class="cj"><k>获</k><k>取</k><k>数</k><k>据</k></i></span></div>
<div class="a fm ln" style="left:0;width:41px;top:651px;height:33px;line-height:33px">88</div>
<div class="a fm code" style="left:109px;top:684px;height:33px;line-height:33px">                img_name = img_html.xpath(<span class="st">'//h1/text()'</span>)[<span class="nu">0</span>]</div>
<div class="a fm ln" style="left:0;width:41px;top:684px;height:33px;line-height:33px">89</div>
<div class="a fm code" style="left:109px;top:717px;height:33px;line-height:33px">                img = img_html.xpath(<span class="st">'//div[@class="article"]//a/img/@src'</span>)[<span class="nu">0</span>]</div>
<div class="a fm ln" style="left:0;width:41px;top:717px;height:33px;line-height:33px">90</div>
<div class="a fm code" style="left:109px;top:750px;height:33px;line-height:33px">                <span class="bi">print</span>(img_name)</div>
<div class="a fm ln" style="left:0;width:41px;top:750px;height:33px;line-height:33px">91</div>
<div class="a fm code" style="left:109px;top:783px;height:33px;line-height:33px">                <span class="bi">print</span>(url + href)</div>
<div class="a fm ln" style="left:0;width:41px;top:783px;height:33px;line-height:33px">92</div>
<div class="a fm code" style="left:109px;top:816px;height:33px;line-height:33px">                <span class="bi">print</span>(img)</div>
<div class="a fm ln" style="left:0;width:41px;top:816px;height:33px;line-height:33px">93</div>
<div class="a fm code" style="left:109px;top:849px;height:33px;line-height:33px">                img_url = requests.get(img)</div>
<div class="a fm ln" style="left:0;width:41px;top:849px;height:33px;line-height:33px">94</div>
<div class="a fm code" style="left:109px;top:882px;height:33px;line-height:33px">                suffix = img[-<span class="nu">4</span>:]</div>
<div class="a fm ln" style="left:0;width:41px;top:882px;height:33px;line-height:33px">95</div>
<div class="a fm code" style="left:109px;top:915px;height:33px;line-height:33px">                <span class="kw">try</span>:</div>
<div class="a fm ln" style="left:0;width:41px;top:915px;height:33px;line-height:33px">96</div>
<div class="a fm code" style="left:109px;top:948px;height:33px;line-height:33px">                    <span class="kw">with</span> <span class="bi">open</span>(<span class="st">'../img/'</span> + img_name + suffix, <span class="pu">mode</span>=<span class="st">"xb"</span>) <span class="kw">as</span> f:</div>
<div class="a fm ln" style="left:0;width:41px;top:948px;height:33px;line-height:33px">97</div>
<div class="a fm code" style="left:109px;top:981px;height:33px;line-height:33px">                        f.write(img_url.content)</div>
<div class="a fm ln" style="left:0;width:41px;top:981px;height:33px;line-height:33px">98</div>
<div class="a fm code" style="left:109px;top:1014px;height:33px;line-height:33px">                <span class="kw">except</span> <span class="bi">FileExistsError</span> <span class="kw">as</span> <span class="gr">e</span>:</div>
<div class="a fm ln" style="left:0;width:41px;top:1014px;height:33px;line-height:33px">99</div>
<div class="a fm code" style="left:109px;top:1047px;height:33px;line-height:33px">                    <span class="kw">pass</span></div>
<div class="a fm ln" style="left:0;width:41px;top:1047px;height:33px;line-height:33px">100</div>
<div class="a fm code" style="left:109px;top:1080px;height:33px;line-height:33px"></div>
<div class="a fm ln" style="left:0;width:41px;top:1080px;height:33px;line-height:33px">101</div>
</div>
<div class="a" style="left:929px;top:979px;width:2.5px;height:27px;background:#000;"></div>
<div class="a" style="left:564px;top:851px;width:19px;height:19px;border-radius:50%;background:#e2525a"></div>
<svg class="a" style="left:600px;top:162px" width="14" height="17" viewBox="0 0 14 17"><path d="M1 1 H13 V10 L7 16 L1 10 Z" fill="#fff" stroke="#b8b8b8" stroke-width="1.2"/><path d="M4 6 H10" stroke="#999" stroke-width="1.3"/></svg>
<svg class="a" style="left:600px;top:360px" width="14" height="17" viewBox="0 0 14 17"><path d="M1 1 H13 V10 L7 16 L1 10 Z" fill="#fff" stroke="#b8b8b8" stroke-width="1.2"/><path d="M4 6 H10" stroke="#999" stroke-width="1.3"/></svg>
<svg class="a" style="left:600px;top:723px" width="14" height="17" viewBox="0 0 14 17"><path d="M1 1 H13 V10 L7 16 L1 10 Z" fill="#fff" stroke="#b8b8b8" stroke-width="1.2"/><path d="M4 6 H10" stroke="#999" stroke-width="1.3"/></svg>
<svg class="a" style="left:600px;top:1086px" width="14" height="17" viewBox="0 0 14 17"><path d="M1 1 H13 V10 L7 16 L1 10 Z" fill="#fff" stroke="#b8b8b8" stroke-width="1.2"/><path d="M4 6 H10" stroke="#999" stroke-width="1.3"/></svg>
<svg class="a" style="left:600px;top:1152px" width="14" height="17" viewBox="0 0 14 17"><path d="M1 16 H13 V7 L7 1 L1 7 Z" fill="#fff" stroke="#b8b8b8" stroke-width="1.2"/><path d="M4 10 H10" stroke="#999" stroke-width="1.3"/></svg>
<svg class="a" style="left:600px;top:1218px" width="14" height="17" viewBox="0 0 14 17"><path d="M1 16 H13 V7 L7 1 L1 7 Z" fill="#fff" stroke="#b8b8b8" stroke-width="1.2"/><path d="M4 10 H10" stroke="#999" stroke-width="1.3"/></svg>
<svg class="a" style="left:2366px;top:176px" width="18" height="16" viewBox="0 0 18 16"><path d="M9 0.5 L17.5 15.5 H0.5 Z" fill="#d8cfae"/><rect x="8" y="5" width="2" height="6" fill="#fff"/><rect x="8" y="12" width="2" height="2" fill="#fff"/></svg>
<div id="t22" class="a fs" style="left:2389px;top:164.0px;height:40px;line-height:40px;font-size:19px;color:#6f6f6f;font-weight:normal;letter-spacing:0.766px;">11</div>
<svg class="a" style="left:2421px;top:175px" width="18" height="19" viewBox="0 0 18 19"><path d="M1 8 L6 13 L16 2" stroke="#59a869" stroke-width="3" fill="none"/><path d="M1 17 L4 14 L7 17 L10 14 L13 17 L16 14" stroke="#59a869" stroke-width="1.3" fill="none"/></svg>
<div id="t23" class="a fs" style="left:2445px;top:164.0px;height:40px;line-height:40px;font-size:19px;color:#6f6f6f;font-weight:normal;letter-spacing:0.000px;">4</div>
<svg class="a" style="left:2472px;top:178px" width="13" height="9" viewBox="0 0 13 9"><path d="M1 8 L6.5 2 L12 8" stroke="#666" stroke-width="1.8" fill="none"/></svg>
<svg class="a" style="left:2504px;top:178px" width="13" height="9" viewBox="0 0 13 9"><path d="M1 1 L6.5 7 L12 1" stroke="#666" stroke-width="1.8" fill="none"/></svg>
<div class="a" style="left:2507px;top:270px;width:20px;height:3px;background:#d9d2b4;"></div>
<div class="a" style="left:2507px;top:340px;width:20px;height:3px;background:#d9d2b4;"></div>
<div class="a" style="left:2507px;top:367px;width:20px;height:3px;background:#d9d2b4;"></div>
<div class="a" style="left:2507px;top:372px;width:20px;height:3px;background:#d9d2b4;"></div>
<div class="a" style="left:2507px;top:419px;width:20px;height:3px;background:#d9d2b4;"></div>
<div class="a" style="left:2507px;top:547px;width:20px;height:3px;background:#d9d2b4;"></div>
<div class="a" style="left:2507px;top:589px;width:20px;height:3px;background:#d9d2b4;"></div>
<div class="a" style="left:2507px;top:658px;width:20px;height:3px;background:#d9d2b4;"></div>
<div class="a" style="left:2507px;top:723px;width:20px;height:3px;background:#d9d2b4;"></div>
<div class="a" style="left:2507px;top:754px;width:20px;height:3px;background:#d9d2b4;"></div>
<div class="a" style="left:2507px;top:668px;width:20px;height:2px;background:#eab3b3;"></div>
<div class="a" style="left:2512px;top:559px;width:14px;height:177px;background:#d0d0d0;border:1px solid #c2c2c2;box-sizing:border-box;opacity:0.8;"></div>
<div class="a" style="left:2515px;top:603px;width:45px;height:44px;border-radius:7px 0 0 7px;background:#e8474b"></div>
<svg class="a" style="left:2524px;top:611px" width="28" height="28" viewBox="0 0 28 28"><circle cx="12" cy="12" r="8" stroke="#fff" stroke-width="2.2" fill="none"/><path d="M18 18 L23 23" stroke="#fff" stroke-width="3.5" stroke-linecap="round"/></svg>
<div class="a" style="left:508px;top:1267px;width:2020px;height:37px;background:#f2f2f2;"></div>
<div class="a" style="left:508px;top:1266px;width:2020px;height:1px;background:#e6e6e6;"></div>
<div id="t24" class="a fs" style="left:622px;top:1266.0px;height:40px;line-height:40px;font-size:18px;color:#5c5c5c;font-weight:normal;letter-spacing:0.212px;">select()</div>
<div id="t25" class="a fs" style="left:719px;top:1266.0px;height:40px;line-height:40px;font-size:18px;color:#5c5c5c;font-weight:normal;letter-spacing:0.967px;">elif ys == '3'</div>
<div id="t26" class="a fs" style="left:861px;top:1266.0px;height:40px;line-height:40px;font-size:18px;color:#5c5c5c;font-weight:normal;letter-spacing:0.843px;">for i in range(a+1, b+1)</div>
<div id="t27" class="a fs" style="left:1099px;top:1266.0px;height:40px;line-height:40px;font-size:18px;color:#5c5c5c;font-weight:normal;letter-spacing:0.757px;">for img_href in img_href</div>
<svg class="a" style="left:702px;top:1279px" width="7" height="13" viewBox="0 0 7 13"><path d="M1.5 1 L6 6.5 L1.5 12" stroke="#9a9a9a" stroke-width="1.3" fill="none"/></svg>
<svg class="a" style="left:845px;top:1279px" width="7" height="13" viewBox="0 0 7 13"><path d="M1.5 1 L6 6.5 L1.5 12" stroke="#9a9a9a" stroke-width="1.3" fill="none"/></svg>
<svg class="a" style="left:1082px;top:1279px" width="7" height="13" viewBox="0 0 7 13"><path d="M1.5 1 L6 6.5 L1.5 12" stroke="#9a9a9a" stroke-width="1.3" fill="none"/></svg>
<div class="a" style="left:33px;top:1304px;width:2495px;height:1.5px;background:#c9c9c9;"></div>
<div class="a" style="left:33px;top:1305px;width:2495px;height:159px;background:#f2f2f2;"></div>
<div id="t28" class="a fs" style="left:43px;top:1305.0px;height:40px;line-height:40px;font-size:17px;color:#111;font-weight:normal;letter-spacing:0.000px;"><span style="font-size:16px;position:relative;top:1px"><k>调</k><k>试</k></span>:</div>
<svg class="a" style="left:113px;top:1314px" width="22" height="22" viewBox="0 0 22 22"><path d="M10 1 C6 1 5 3 5 5 V8 H11 V9 H3 C1 9 0 11 0 13 C0 16 1 17 3 17 H5 V14 C5 12 6 11 8 11 H13 C15 11 16 10 16 8 V4 C16 2 14 1 10 1 Z" fill="#a9c6e4"/><path d="M12 21 C16 21 17 19 17 17 V14 H11 V13 H19 C21 13 22 11 22 9 C22 6 21 5 19 5 H17 V8 C17 10 16 11 14 11 H9 C7 11 6 12 6 14 V18 C6 20 8 21 12 21 Z" fill="#f4e08a"/></svg>
<div id="t29" class="a fs" style="left:141px;top:1305.0px;height:40px;line-height:40px;font-size:18px;color:#111;font-weight:normal;">04</div>
<svg class="a" style="left:174px;top:1319px" width="12" height="12" viewBox="0 0 12 12"><path d="M1 1 L11 11 M11 1 L1 11" stroke="#aaa" stroke-width="1.5"/></svg>
<div class="a" style="left:93px;top:1341px;width:110px;height:4px;background:#a0a6b3;"></div>
<svg class="a" style="left:2458px;top:1315px" width="20" height="20" viewBox="0 0 20 20"><circle cx="10" cy="10" r="6.6" fill="#6e6e6e"/><rect x="7.9" y="0.8" width="4.2" height="4.5" transform="rotate(0 10 10)" fill="#6e6e6e"/><rect x="7.9" y="0.8" width="4.2" height="4.5" transform="rotate(60 10 10)" fill="#6e6e6e"/><rect x="7.9" y="0.8" width="4.2" height="4.5" transform="rotate(120 10 10)" fill="#6e6e6e"/><rect x="7.9" y="0.8" width="4.2" height="4.5" transform="rotate(180 10 10)" fill="#6e6e6e"/><rect x="7.9" y="0.8" width="4.2" height="4.5" transform="rotate(240 10 10)" fill="#6e6e6e"/><rect x="7.9" y="0.8" width="4.2" height="4.5" transform="rotate(300 10 10)" fill="#6e6e6e"/><circle cx="10" cy="10" r="2.6" fill="#f2f2f2"/></svg>
<div class="a" style="left:2500px;top:1324px;width:18px;height:2.5px;background:#6e6e6e;"></div>
<div class="a" style="left:75px;top:1345px;width:1.5px;height:120px;background:#d6d6d6;"></div>
<svg class="a" style="left:45px;top:1356px" width="18" height="19" viewBox="0 0 18 19"><path d="M5.5 1.5 L7.5 4.5 M12.5 1.5 L10.5 4.5" stroke="#59a869" stroke-width="2.4"/><path d="M3.5 7.5 Q3.5 3.5 9 3.5 Q14.5 3.5 14.5 7.5 Z" fill="#59a869"/><rect x="2.5" y="6.5" width="13" height="11.5" rx="6" fill="#59a869"/><path d="M0 8.5 H3 M15 8.5 H18 M0 12.5 H3 M15 12.5 H18 M0.5 16.5 H3.5 M14.5 16.5 H17.5" stroke="#59a869" stroke-width="2.4"/><rect x="6" y="9.5" width="6" height="1.8" fill="#f2f2f2"/><rect x="6" y="13" width="6" height="1.8" fill="#f2f2f2"/></svg>
<svg class="a" style="left:44px;top:1396px" width="21" height="21" viewBox="0 0 21 21"><path d="M3 18 L11 10" stroke="#6e6e6e" stroke-width="4.2" stroke-linecap="round"/><circle cx="14" cy="7" r="5.8" fill="#6e6e6e"/><path d="M14.5 6.5 L19 2" stroke="#f2f2f2" stroke-width="4" stroke-linecap="round"/></svg>
<div class="a" style="left:39px;top:1430px;width:29px;height:1.5px;background:#cfcfcf;"></div>
<div id="t30" class="a fs" style="left:45px;top:1430.0px;height:40px;line-height:40px;font-size:17px;color:#777;font-weight:normal;">››</div>
<div id="t31" class="a fs" style="left:95px;top:1346.0px;height:40px;line-height:40px;font-size:17px;color:#111;font-weight:normal;letter-spacing:0.000px;"><span style="font-size:16px;position:relative;top:1px"><k>调</k><k>试</k><k>器</k></span></div>
<div id="t32" class="a fs" style="left:177px;top:1346.0px;height:40px;line-height:40px;font-size:17px;color:#111;font-weight:normal;letter-spacing:0.000px;"><span style="font-size:16px;position:relative;top:1px"><k>控</k><k>制</k><k>台</k></span></div>
<div class="a" style="left:76px;top:1384px;width:84px;height:3px;background:#a0a6b3;"></div>
<svg class="a" style="left:252px;top:1358px" width="19" height="16" viewBox="0 0 19 16"><path d="M0 2 H19 M0 8 H19 M0 14 H19" stroke="#a8a8a8" stroke-width="2.8"/></svg>
<div class="a" style="left:286px;top:1350px;width:1.5px;height:30px;background:#cfcfcf;"></div>
<svg class="a" style="left:300px;top:1356px" width="20" height="20" viewBox="0 0 20 20"><path d="M1 10 L6 4 L12 9 L16 5" stroke="#b4b4b4" stroke-width="2.2" fill="none"/><path d="M18 3 V10 L11 10Z" fill="#b4b4b4"/><path d="M1 16 H19" stroke="#b4b4b4" stroke-width="2.5"/></svg>
<svg class="a" style="left:339px;top:1356px" width="20" height="20" viewBox="0 0 20 20"><path d="M10 0 V9" stroke="#b4b4b4" stroke-width="2.5"/><path d="M4 7 H16 L10 13Z" fill="#b4b4b4"/><path d="M1 17 H19" stroke="#b4b4b4" stroke-width="2.5"/></svg>
<svg class="a" style="left:378px;top:1356px" width="20" height="20" viewBox="0 0 20 20"><path d="M10 5 V14" stroke="#b4b4b4" stroke-width="2.5"/><path d="M4 7 H16 L10 1Z" fill="#b4b4b4"/><path d="M1 17 H19" stroke="#b4b4b4" stroke-width="2.5"/></svg>
<svg class="a" style="left:417px;top:1356px" width="22" height="22" viewBox="0 0 22 22"><path d="M1 1 L10 10" stroke="#b4b4b4" stroke-width="2.5"/><path d="M11 3 V11 H3Z" fill="#b4b4b4"/><path d="M14 10 H20 M17 10 V21 M14 21 H20" stroke="#b4b4b4" stroke-width="1.6"/></svg>
<div class="a" style="left:452px;top:1350px;width:1.5px;height:30px;background:#cfcfcf;"></div>
<svg class="a" style="left:467px;top:1356px" width="19" height="19" viewBox="0 0 19 19"><rect x="1" y="1" width="17" height="17" fill="none" stroke="#b4b4b4" stroke-width="2"/><path d="M1 6.5 H18 M1 12 H18 M6.5 6.5 V18 M12 6.5 V18" stroke="#b4b4b4" stroke-width="2"/></svg>
<svg class="a" style="left:2500px;top:1357px" width="23" height="26" viewBox="0 0 23 26"><rect x="0" y="0" width="9" height="8" fill="#6e6e6e"/><rect x="11" y="0" width="9" height="8" fill="#6e6e6e"/><rect x="0" y="10" width="20" height="7" fill="#6e6e6e"/><path d="M16 20 H23 L19.5 24Z" fill="#333"/></svg>
<div class="a" style="left:76px;top:1387px;width:2452px;height:1.5px;background:#d6d6d6;"></div>
<div id="t33" class="a fs" style="left:95px;top:1389.0px;height:40px;line-height:40px;font-size:17px;color:#111;font-weight:normal;letter-spacing:0.000px;"><span style="font-size:16px;position:relative;top:1px"><k>帧</k></span></div>
<div id="t34" class="a fs" style="left:581px;top:1389.0px;height:40px;line-height:40px;font-size:17px;color:#111;font-weight:normal;letter-spacing:0.000px;"><span style="font-size:16px;position:relative;top:1px"><k>变</k><k>量</k></span></div>
<div class="a" style="left:561px;top:1387px;width:1.5px;height:78px;background:#d4d4d4;"></div>
<div class="a" style="left:76px;top:1428px;width:2452px;height:1.5px;background:#d6d6d6;"></div>
<div class="a" style="left:76px;top:1430px;width:485px;height:34px;background:#fcfcfc;"></div>
<svg class="a" style="left:531px;top:1446px" width="16" height="9" viewBox="0 0 16 9"><path d="M0 0 H16 L8 9Z" fill="#333"/></svg>
<div id="t35" class="a fs" style="left:575px;top:1432.0px;height:40px;line-height:40px;font-size:17px;color:#777;font-weight:normal;">››</div>
<div class="a" style="left:598px;top:1430px;width:1.5px;height:34px;background:#d9d9d9;"></div>
<div class="a" style="left:600px;top:1430px;width:1928px;height:34px;background:#ffffff;"></div>
<div class="a fm" style="left:614px;top:1434px;height:34px;line-height:34px;font-size:18px;color:#a8a8a8;white-space:nowrap"><k>评</k><k>估</k><k>表</k><k>达</k><k>式</k>(Enter)<k>或</k><k>添</k><k>加</k><k>监</k><k>视</k>(Ctrl+Shift+Enter)</div>
<svg class="a" style="left:2465px;top:1440px" width="24" height="24" viewBox="0 0 24 24"><path d="M6 2 V14 M0 8 H12" stroke="#b0b0b0" stroke-width="1.8"/><circle cx="9" cy="19" r="3" fill="none" stroke="#b0b0b0" stroke-width="1.4"/><circle cx="17" cy="19" r="3" fill="none" stroke="#b0b0b0" stroke-width="1.4"/></svg>
<svg class="a" style="left:2497px;top:1446px" width="16" height="9" viewBox="0 0 16 9"><path d="M0 0 H16 L8 9Z" fill="#333"/></svg>
<div class="a" style="left:0px;top:1464px;width:2560px;height:1.5px;background:#c9c9c9;"></div>
<div class="a" style="left:0px;top:1465px;width:2560px;height:32px;background:#f2f2f2;"></div>
<div class="a" style="left:295px;top:1465px;width:84px;height:32px;background:#bdbdbd;"></div>
<svg class="a" style="left:51px;top:1474px" width="14" height="19" viewBox="0 0 14 19"><circle cx="3" cy="3" r="2.5" fill="#6e6e6e"/><circle cx="3" cy="16" r="2.5" fill="#6e6e6e"/><circle cx="11" cy="5" r="2.5" fill="#6e6e6e"/><path d="M3 3 V16 M11 5 Q11 11 3 13" stroke="#6e6e6e" stroke-width="2.2" fill="none"/></svg>
<div id="t36" class="a fs" style="left:75px;top:1465.5px;height:40px;line-height:40px;font-size:17px;color:#111;font-weight:normal;letter-spacing:0.233px;">Version Control</div>
<svg class="a" style="left:227px;top:1476px" width="12" height="15" viewBox="0 0 12 15"><path d="M0 0 L12 7.5 L0 15Z" fill="#6e6e6e"/></svg>
<div id="t37" class="a fs" style="left:251px;top:1465.5px;height:40px;line-height:40px;font-size:17px;color:#111;font-weight:normal;letter-spacing:0.000px;"><span style="font-size:16px;position:relative;top:1px"><k>运</k><k>行</k></span></div>
<svg class="a" style="left:309px;top:1475px" width="17" height="17" viewBox="0 0 18 19"><path d="M5.5 1.5 L7.5 4.5 M12.5 1.5 L10.5 4.5" stroke="#5a5a5a" stroke-width="2.4"/><path d="M3.5 7.5 Q3.5 3.5 9 3.5 Q14.5 3.5 14.5 7.5 Z" fill="#5a5a5a"/><rect x="2.5" y="6.5" width="13" height="11.5" rx="6" fill="#5a5a5a"/><path d="M0 8.5 H3 M15 8.5 H18 M0 12.5 H3 M15 12.5 H18 M0.5 16.5 H3.5 M14.5 16.5 H17.5" stroke="#5a5a5a" stroke-width="2.4"/><rect x="6" y="9.5" width="6" height="1.8" fill="#bdbdbd"/><rect x="6" y="13" width="6" height="1.8" fill="#bdbdbd"/></svg>
<div id="t38" class="a fs" style="left:335px;top:1465.5px;height:40px;line-height:40px;font-size:17px;color:#111;font-weight:normal;letter-spacing:0.000px;"><span style="font-size:16px;position:relative;top:1px"><k>调</k><k>试</k></span></div>
<svg class="a" style="left:398px;top:1474px" width="18" height="18" viewBox="0 0 18 18"><path d="M9 0.5 C5.5 0.5 5 2 5 3.5 V6 H9.5 V7 H3 C1.5 7 0.5 8.5 0.5 10 C0.5 12 1.5 13 3 13 H4.5 V11 C4.5 9.5 5.5 8.5 7 8.5 H11 C12.5 8.5 13.5 7.5 13.5 6 V3.5 C13.5 2 12 0.5 9 0.5Z" fill="#6e6e6e"/><path d="M9 17.5 C12.5 17.5 13 16 13 14.5 V12 H8.5 V11 H15 C16.5 11 17.5 9.5 17.5 8 C17.5 6 16.5 5 15 5 H13.5 V7 C13.5 8.5 12.5 9.5 11 9.5 H7 C5.5 9.5 4.5 10.5 4.5 12 V14.5 C4.5 16 6 17.5 9 17.5Z" fill="#6e6e6e"/></svg>
<div id="t39" class="a fs" style="left:423px;top:1465.5px;height:40px;line-height:40px;font-size:17px;color:#111;font-weight:normal;letter-spacing:0.473px;">Python <span style="font-size:16px;position:relative;top:1px"><k>控</k><k>制</k><k>台</k></span></div>
<svg class="a" style="left:564px;top:1474px" width="19" height="19" viewBox="0 0 19 19"><path d="M9.5 1 L18 5 L9.5 9 L1 5Z" fill="#6e6e6e"/><path d="M1 9 L9.5 13 L18 9 M1 13 L9.5 17 L18 13" stroke="#6e6e6e" stroke-width="2" fill="none"/></svg>
<div id="t40" class="a fs" style="left:591px;top:1465.5px;height:40px;line-height:40px;font-size:17px;color:#111;font-weight:normal;letter-spacing:-0.058px;">Python Packages</div>
<svg class="a" style="left:754px;top:1474px" width="17" height="16" viewBox="0 0 17 16"><rect x="0" y="0" width="17" height="16" fill="#6e6e6e"/><path d="M3 4 L7 7.5 L3 11 M8 12 H13" stroke="#f2f2f2" stroke-width="1.6" fill="none"/></svg>
<div id="t41" class="a fs" style="left:778px;top:1465.5px;height:40px;line-height:40px;font-size:17px;color:#111;font-weight:normal;letter-spacing:0.000px;"><span style="font-size:16px;position:relative;top:1px"><k>终</k><k>端</k></span></div>
<svg class="a" style="left:838px;top:1474px" width="17" height="17" viewBox="0 0 17 17"><circle cx="8.5" cy="8.5" r="8.5" fill="#6e6e6e"/><rect x="7.3" y="3.5" width="2.4" height="7" fill="#f2f2f2"/><rect x="7.3" y="12" width="2.4" height="2.4" fill="#f2f2f2"/></svg>
<div id="t42" class="a fs" style="left:862px;top:1465.5px;height:40px;line-height:40px;font-size:17px;color:#111;font-weight:normal;letter-spacing:0.000px;"><span style="font-size:16px;position:relative;top:1px"><k>问</k><k>题</k></span></div>
<svg class="a" style="left:2323px;top:1478px" width="16" height="13" viewBox="0 0 16 13"><path d="M0 1.5 H3 M5 1.5 H16 M0 6.5 H3 M5 6.5 H16 M0 11.5 H3 M5 11.5 H16" stroke="#6e6e6e" stroke-width="2.4"/></svg>
<div id="t43" class="a fs" style="left:2346px;top:1465.5px;height:40px;line-height:40px;font-size:17px;color:#111;font-weight:normal;letter-spacing:-0.438px;">TODO</div>
<svg class="a" style="left:2421px;top:1475px" width="20" height="20" viewBox="0 0 20 20"><path d="M18.8 10 A8.8 8.8 0 1 0 10 18.8 H18.8 Z" fill="none" stroke="#6e6e6e" stroke-width="2"/></svg>
<div id="t44" class="a fs" style="left:2448px;top:1465.5px;height:40px;line-height:40px;font-size:17px;color:#111;font-weight:normal;letter-spacing:0.000px;"><span style="font-size:16px;position:relative;top:1px"><k>事</k><k>件</k><k>日</k><k>志</k></span></div>
<div class="a" style="left:0px;top:1497px;width:2560px;height:1.5px;background:#bcbcbc;"></div>
<div class="a" style="left:0px;top:1498px;width:2560px;height:30px;background:#f2f2f2;"></div>
<div class="a" style="left:9px;top:1508px;width:15px;height:15px;border-left:1.5px solid #666;border-bottom:1.5px solid #666;box-sizing:border-box"></div>
<div class="a" style="left:12px;top:1505px;width:15px;height:15px;border:1.5px solid #666;box-sizing:border-box"></div>
<div class="a" style="left:2427px;top:1498px;width:49px;height:30px;background:#b8b8b8;"></div>
<div class="a" style="left:2476px;top:1498px;width:23px;height:30px;background:#d2d2d2;"></div>
<div id="t45" class="a fs" style="left:1968px;top:1493.5px;height:40px;line-height:40px;font-size:19px;color:#111;font-weight:normal;letter-spacing:0.235px;">93:27</div>
<div id="t46" class="a fs" style="left:2034px;top:1493.5px;height:40px;line-height:40px;font-size:19px;color:#111;font-weight:normal;letter-spacing:-1.600px;">CRLF</div>
<div id="t47" class="a fs" style="left:2096px;top:1493.5px;height:40px;line-height:40px;font-size:19px;color:#111;font-weight:normal;letter-spacing:-0.085px;">UTF-8</div>
<div id="t48" class="a fs" style="left:2291px;top:1493.5px;height:40px;line-height:40px;font-size:19px;color:#111;font-weight:normal;letter-spacing:0.184px;">Python 3.8</div>
<div id="t49" class="a fs" style="left:2438px;top:1493.5px;height:40px;line-height:40px;font-size:19px;color:#111;font-weight:normal;letter-spacing:1.053px;">417/1024M</div>
<div id="t50" class="a fs" style="left:2201px;top:1493.5px;height:40px;line-height:40px;font-size:19px;color:#111;font-weight:normal;">4 <span style="font-size:18.5px;position:relative;top:1.5px"><k>个</k><k>空</k><k>格</k></span></div>
<svg class="a" style="left:2165px;top:1505px" width="20" height="14" viewBox="0 0 20 14"><path d="M1 7 Q10 -2 19 7 Q10 16 1 7Z" fill="#6e6e6e"/><circle cx="10" cy="7" r="3.2" fill="#f2f2f2"/><circle cx="10" cy="7" r="1.8" fill="#6e6e6e"/></svg>
<svg class="a" style="left:2398px;top:1502px" width="18" height="20" viewBox="0 0 18 20"><path d="M3 9 V5 A4 4 0 0 1 11 5" stroke="#6e6e6e" stroke-width="2" fill="none"/><rect x="6" y="9" width="12" height="10" fill="#6e6e6e"/></svg>
<div class="a" style="left:0px;top:1528px;width:2560px;height:11px;background:linear-gradient(90deg,#dbeaf7 0%,#d9ebf8 35%,#e1e6f7 47%,#f3d9ec 58%,#f9d4e5 66%,#f9d3e4 100%);"></div></body></html>
